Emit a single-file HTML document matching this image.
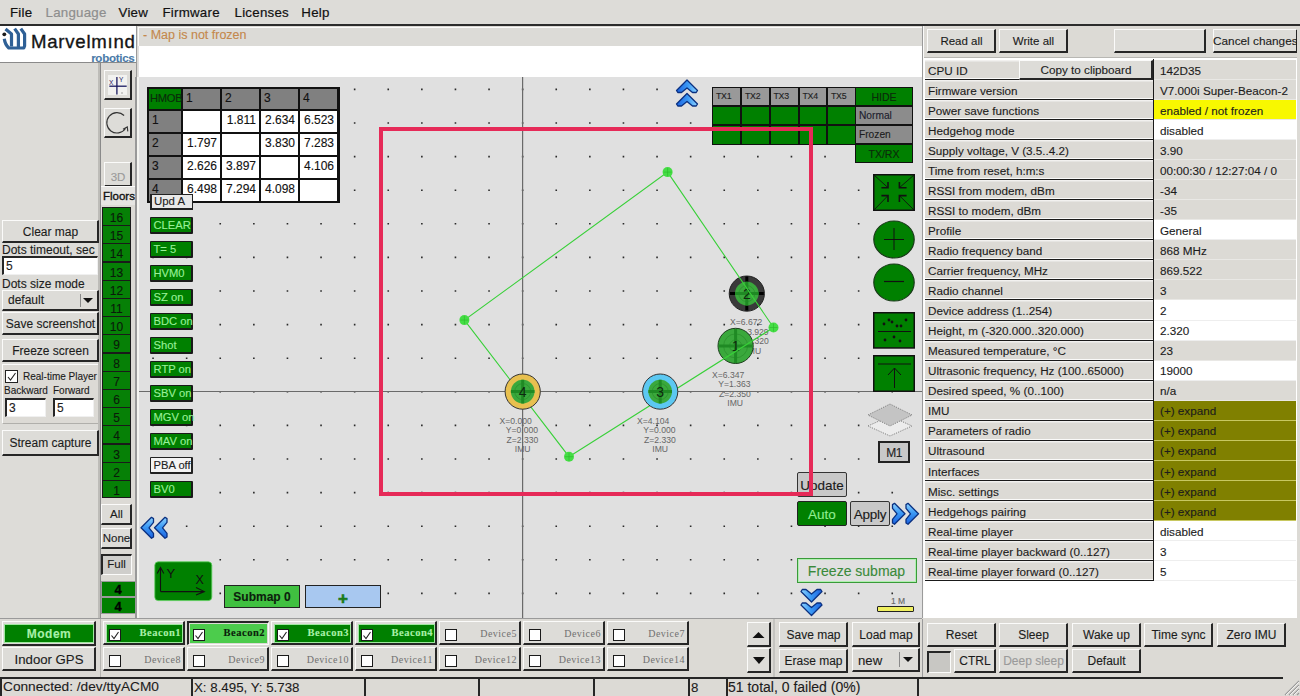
<!DOCTYPE html><html><head><meta charset="utf-8"><style>
*{margin:0;padding:0}
html,body{width:1300px;height:696px;overflow:hidden;background:#dcdad5;font-family:"Liberation Sans",sans-serif}
.a{position:absolute;box-sizing:border-box}
.t{position:absolute;line-height:1;white-space:nowrap;color:#1c1c1c;-webkit-text-stroke:0.12px}
.up{background:#dddcd8;border-top:1px solid #fbfbfa;border-left:1px solid #fbfbfa;border-right:2px solid #262626;border-bottom:2px solid #262626}
.dn{background:#d0cfcb;border-top:2px solid #262626;border-left:2px solid #262626;border-right:1px solid #fbfbfa;border-bottom:1px solid #fbfbfa}
.inp{background:#fff;border-top:2px solid #262626;border-left:2px solid #262626;border-right:1px solid #f0f0f0;border-bottom:1px solid #f0f0f0}
</style></head><body><div class="a " style="left:0px;top:0px;width:1300px;height:24px;background:#dddcd8"></div>
<div class="a " style="left:0px;top:24px;width:1300px;height:1.8px;background:#2c2c2c"></div>
<div class="t" style="left:10px;top:5.74px;font-size:13.3px;font-family:'Liberation Sans',sans-serif;font-weight:normal;color:#111;letter-spacing:0.25px;-webkit-text-stroke:0.2px #111">File</div>
<div class="t" style="left:45.5px;top:5.74px;font-size:13.3px;font-family:'Liberation Sans',sans-serif;font-weight:normal;color:#8e8e8e;letter-spacing:0.25px;-webkit-text-stroke:0.2px #8e8e8e">Language</div>
<div class="t" style="left:118.5px;top:5.74px;font-size:13.3px;font-family:'Liberation Sans',sans-serif;font-weight:normal;color:#111;letter-spacing:0.25px;-webkit-text-stroke:0.2px #111">View</div>
<div class="t" style="left:162.4px;top:5.74px;font-size:13.3px;font-family:'Liberation Sans',sans-serif;font-weight:normal;color:#111;letter-spacing:0.25px;-webkit-text-stroke:0.2px #111">Firmware</div>
<div class="t" style="left:234.5px;top:5.74px;font-size:13.3px;font-family:'Liberation Sans',sans-serif;font-weight:normal;color:#111;letter-spacing:0.25px;-webkit-text-stroke:0.2px #111">Licenses</div>
<div class="t" style="left:301.3px;top:5.74px;font-size:13.3px;font-family:'Liberation Sans',sans-serif;font-weight:normal;color:#111;letter-spacing:0.25px;-webkit-text-stroke:0.2px #111">Help</div>
<div class="a " style="left:0px;top:26px;width:136px;height:36px;background:#fff"></div>
<div class="a " style="left:0px;top:62px;width:136px;height:1px;background:#8a8a8a"></div>
<svg class="a" style="left:0px;top:24px" width="30" height="30" viewBox="0 0 30 30">
<g fill="none" stroke="#2f6096" stroke-width="3.2" stroke-linejoin="round">
<path d="M5.5 5 L11.5 10 L11.5 22.5"/>
<path d="M4.3 14.8 Q5 20.5 8.8 24 L23.8 24 L24.6 22 L24.6 10 L20.8 4.6"/>
<path d="M14.6 4.6 L18.4 10 L18.4 23"/>
</g>
<circle cx="4.3" cy="10.3" r="1.9" fill="#1a1a1a"/>
</svg>
<div class="t" style="left:31px;top:32.86px;font-size:18.6px;font-family:'Liberation Sans',sans-serif;font-weight:normal;color:#141414;letter-spacing:0.75px;-webkit-text-stroke:0.35px #141414">Marvelm&#305;nd</div>
<div class="t" style="left:54.50px;width:80px;text-align:right;top:52.18px;font-size:11.6px;font-family:'Liberation Sans',sans-serif;font-weight:bold;color:#4a7aa8;letter-spacing:-0.3px">robotics</div>
<div class="a " style="left:0px;top:63px;width:100px;height:555px;background:#dddcd8"></div>
<div class="a " style="left:98px;top:63px;width:2px;height:555px;background:#bdbcb8"></div>
<div class="a " style="left:100px;top:63px;width:36px;height:555px;background:#dcdad5"></div>
<div class="a " style="left:100px;top:63px;width:1px;height:555px;background:#8a8a8a"></div>
<div class="a up" style="left:104px;top:70px;width:28px;height:30px;"></div>
<svg class="a" style="left:104px;top:70px" width="28" height="30">
<rect x="4" y="5" width="19" height="20" fill="#f2f2f0"/>
<line x1="5.3" y1="16.2" x2="22.7" y2="16.2" stroke="#1a1a60" stroke-width="1.3"/>
<line x1="12.9" y1="6.9" x2="12.9" y2="24.4" stroke="#1a1a60" stroke-width="1.3"/>
<text x="5" y="15" font-size="6.5" fill="#1a1a60" font-family="Liberation Sans">X</text>
<text x="15" y="11.5" font-size="6.5" fill="#1a1a60" font-family="Liberation Sans">Y</text>
<rect x="17.5" y="22.5" width="1" height="1" fill="#555"/>
</svg>
<div class="a up" style="left:104px;top:108px;width:28px;height:30px;"></div>
<svg class="a" style="left:104px;top:108px" width="28" height="30">
<path d="M20.1 7.5 A10.2 10.2 0 1 0 21.5 20.5" fill="none" stroke="#333" stroke-width="1.1"/>
<path d="M19 21.2 L23.3 18.9 L23.8 23.4" fill="none" stroke="#333" stroke-width="1.1"/>
</svg>
<div class="a up" style="left:104px;top:162px;width:28px;height:25px;"></div>
<div class="t" style="left:94.00px;width:48px;text-align:center;top:171.77px;font-size:11.5px;font-family:'Liberation Sans',sans-serif;font-weight:normal;color:#9a9a9a;">3D</div>
<div class="a " style="left:101px;top:186px;width:34px;height:19px;background:#e6e5e2;border-top:1px solid #fbfbfa"></div>
<div class="t" style="left:103px;top:191.27px;font-size:11.5px;font-family:'Liberation Sans',sans-serif;font-weight:normal;color:#111;-webkit-text-stroke:0.35px #111">Floors</div>
<div class="a " style="left:102px;top:207px;width:29px;height:19px;background:#068006;border:1px solid #1a1a1a;border-bottom-width:1.5px"></div>
<div class="t" style="left:101.50px;width:30px;text-align:center;top:212.34px;font-size:12px;font-family:'Liberation Sans',sans-serif;font-weight:normal;color:#0a1a0a">16</div>
<div class="a " style="left:102px;top:225px;width:29px;height:19px;background:#068006;border:1px solid #1a1a1a;border-bottom-width:1.5px"></div>
<div class="t" style="left:101.50px;width:30px;text-align:center;top:230.34px;font-size:12px;font-family:'Liberation Sans',sans-serif;font-weight:normal;color:#0a1a0a">15</div>
<div class="a " style="left:102px;top:243px;width:29px;height:19px;background:#068006;border:1px solid #1a1a1a;border-bottom-width:1.5px"></div>
<div class="t" style="left:101.50px;width:30px;text-align:center;top:248.34px;font-size:12px;font-family:'Liberation Sans',sans-serif;font-weight:normal;color:#0a1a0a">14</div>
<div class="a " style="left:102px;top:262px;width:29px;height:19px;background:#068006;border:1px solid #1a1a1a;border-bottom-width:1.5px"></div>
<div class="t" style="left:101.50px;width:30px;text-align:center;top:267.34px;font-size:12px;font-family:'Liberation Sans',sans-serif;font-weight:normal;color:#0a1a0a">13</div>
<div class="a " style="left:102px;top:280px;width:29px;height:19px;background:#068006;border:1px solid #1a1a1a;border-bottom-width:1.5px"></div>
<div class="t" style="left:101.50px;width:30px;text-align:center;top:285.34px;font-size:12px;font-family:'Liberation Sans',sans-serif;font-weight:normal;color:#0a1a0a">12</div>
<div class="a " style="left:102px;top:298px;width:29px;height:19px;background:#068006;border:1px solid #1a1a1a;border-bottom-width:1.5px"></div>
<div class="t" style="left:101.50px;width:30px;text-align:center;top:303.34px;font-size:12px;font-family:'Liberation Sans',sans-serif;font-weight:normal;color:#0a1a0a">11</div>
<div class="a " style="left:102px;top:316px;width:29px;height:19px;background:#068006;border:1px solid #1a1a1a;border-bottom-width:1.5px"></div>
<div class="t" style="left:101.50px;width:30px;text-align:center;top:321.34px;font-size:12px;font-family:'Liberation Sans',sans-serif;font-weight:normal;color:#0a1a0a">10</div>
<div class="a " style="left:102px;top:334px;width:29px;height:19px;background:#068006;border:1px solid #1a1a1a;border-bottom-width:1.5px"></div>
<div class="t" style="left:101.50px;width:30px;text-align:center;top:339.34px;font-size:12px;font-family:'Liberation Sans',sans-serif;font-weight:normal;color:#0a1a0a">9</div>
<div class="a " style="left:102px;top:353px;width:29px;height:19px;background:#068006;border:1px solid #1a1a1a;border-bottom-width:1.5px"></div>
<div class="t" style="left:101.50px;width:30px;text-align:center;top:358.34px;font-size:12px;font-family:'Liberation Sans',sans-serif;font-weight:normal;color:#0a1a0a">8</div>
<div class="a " style="left:102px;top:371px;width:29px;height:19px;background:#068006;border:1px solid #1a1a1a;border-bottom-width:1.5px"></div>
<div class="t" style="left:101.50px;width:30px;text-align:center;top:376.34px;font-size:12px;font-family:'Liberation Sans',sans-serif;font-weight:normal;color:#0a1a0a">7</div>
<div class="a " style="left:102px;top:389px;width:29px;height:19px;background:#068006;border:1px solid #1a1a1a;border-bottom-width:1.5px"></div>
<div class="t" style="left:101.50px;width:30px;text-align:center;top:394.34px;font-size:12px;font-family:'Liberation Sans',sans-serif;font-weight:normal;color:#0a1a0a">6</div>
<div class="a " style="left:102px;top:407px;width:29px;height:19px;background:#068006;border:1px solid #1a1a1a;border-bottom-width:1.5px"></div>
<div class="t" style="left:101.50px;width:30px;text-align:center;top:412.34px;font-size:12px;font-family:'Liberation Sans',sans-serif;font-weight:normal;color:#0a1a0a">5</div>
<div class="a " style="left:102px;top:425px;width:29px;height:19px;background:#068006;border:1px solid #1a1a1a;border-bottom-width:1.5px"></div>
<div class="t" style="left:101.50px;width:30px;text-align:center;top:430.34px;font-size:12px;font-family:'Liberation Sans',sans-serif;font-weight:normal;color:#0a1a0a">4</div>
<div class="a " style="left:102px;top:444px;width:29px;height:19px;background:#068006;border:1px solid #1a1a1a;border-bottom-width:1.5px"></div>
<div class="t" style="left:101.50px;width:30px;text-align:center;top:449.34px;font-size:12px;font-family:'Liberation Sans',sans-serif;font-weight:normal;color:#0a1a0a">3</div>
<div class="a " style="left:102px;top:462px;width:29px;height:19px;background:#068006;border:1px solid #1a1a1a;border-bottom-width:1.5px"></div>
<div class="t" style="left:101.50px;width:30px;text-align:center;top:467.34px;font-size:12px;font-family:'Liberation Sans',sans-serif;font-weight:normal;color:#0a1a0a">2</div>
<div class="a " style="left:102px;top:480px;width:29px;height:18px;background:#068006;border:1px solid #1a1a1a;border-bottom-width:1.5px"></div>
<div class="t" style="left:101.50px;width:30px;text-align:center;top:485.34px;font-size:12px;font-family:'Liberation Sans',sans-serif;font-weight:normal;color:#0a1a0a">1</div>
<div class="a up" style="left:101px;top:504px;width:31px;height:21px;"></div>
<div class="t" style="left:91.00px;width:51px;text-align:center;top:508.91px;font-size:11.5px;font-family:'Liberation Sans',sans-serif;font-weight:normal;color:#1c1c1c;">All</div>
<div class="a up" style="left:101px;top:528px;width:31px;height:21px;"></div>
<div class="t" style="left:91.00px;width:51px;text-align:center;top:532.91px;font-size:11.5px;font-family:'Liberation Sans',sans-serif;font-weight:normal;color:#1c1c1c;">None</div>
<div class="a " style="left:101px;top:554px;width:31px;height:21px;background:#cfcecb;border-top:2px solid #262626;border-left:2px solid #262626;border-right:1px solid #fbfbfa;border-bottom:1px solid #fbfbfa"></div>
<div class="t" style="left:96.50px;width:40px;text-align:center;top:559.27px;font-size:11.5px;font-family:'Liberation Sans',sans-serif;font-weight:normal;color:#1c1c1c">Full</div>
<div class="a " style="left:101px;top:581px;width:35px;height:16px;background:#008000;border:1px solid #9a9a9a"></div>
<div class="t" style="left:103.00px;width:30px;text-align:center;top:583.00px;font-size:13px;font-family:'Liberation Sans',sans-serif;font-weight:bold;color:#000;-webkit-text-stroke:0.3px #000">4</div>
<div class="a " style="left:101px;top:597px;width:35px;height:17px;background:#008000;border:1px solid #9a9a9a"></div>
<div class="t" style="left:103.00px;width:30px;text-align:center;top:599.50px;font-size:13px;font-family:'Liberation Sans',sans-serif;font-weight:bold;color:#000;-webkit-text-stroke:0.3px #000">4</div>
<div class="a up" style="left:2px;top:220px;width:97px;height:23px;"></div>
<div class="t" style="left:-8.00px;width:117px;text-align:center;top:225.66px;font-size:12px;font-family:'Liberation Sans',sans-serif;font-weight:normal;color:#1c1c1c;">Clear map</div>
<div class="t" style="left:2px;top:243.84px;font-size:12px;font-family:'Liberation Sans',sans-serif;font-weight:normal;">Dots timeout, sec</div>
<div class="a inp" style="left:2px;top:256px;width:96px;height:19px;"></div>
<div class="t" style="left:6px;top:259.84px;font-size:12px;font-family:'Liberation Sans',sans-serif;font-weight:normal;">5</div>
<div class="t" style="left:2px;top:277.84px;font-size:12px;font-family:'Liberation Sans',sans-serif;font-weight:normal;">Dots size mode</div>
<div class="a up" style="left:2px;top:290px;width:97px;height:21px;"></div>
<div class="t" style="left:8px;top:293.84px;font-size:12px;font-family:'Liberation Sans',sans-serif;font-weight:normal;">default</div>
<div class="a " style="left:80px;top:294px;width:1px;height:13px;background:#8a8a8a"></div>
<svg class="a" style="left:82px;top:295px" width="12" height="10"><path d="M1 3 L11 3 L6 8Z" fill="#111"/></svg>
<div class="a up" style="left:2px;top:312px;width:97px;height:23px;"></div>
<div class="t" style="left:-8.00px;width:117px;text-align:center;top:317.66px;font-size:12px;font-family:'Liberation Sans',sans-serif;font-weight:normal;color:#1c1c1c;">Save screenshot</div>
<div class="a up" style="left:2px;top:339px;width:97px;height:23px;"></div>
<div class="t" style="left:-8.00px;width:117px;text-align:center;top:344.66px;font-size:12px;font-family:'Liberation Sans',sans-serif;font-weight:normal;color:#1c1c1c;">Freeze screen</div>
<div class="a " style="left:2px;top:364px;width:96px;height:60px;background:#dcdad5;border-top:1px solid #fbfbfa;border-left:1px solid #fbfbfa;border-bottom:1px solid #b0afab"></div>
<div class="a " style="left:5px;top:370px;width:13px;height:13px;background:#fff;border:1.5px solid #222"></div>
<svg class="a" style="left:5px;top:370px" width="13" height="13"><path d="M3 7 L5.5 10 L10.5 3" fill="none" stroke="#222" stroke-width="1.1"/></svg>
<div class="t" style="left:23px;top:371.54px;font-size:10px;font-family:'Liberation Sans',sans-serif;font-weight:normal;color:#1c1c1c">Real-time Player</div>
<div class="t" style="left:4px;top:386.04px;font-size:10px;font-family:'Liberation Sans',sans-serif;font-weight:normal;color:#1c1c1c">Backward</div>
<div class="t" style="left:53px;top:386.04px;font-size:10px;font-family:'Liberation Sans',sans-serif;font-weight:normal;color:#1c1c1c">Forward</div>
<div class="a inp" style="left:5px;top:398px;width:41px;height:19px;"></div>
<div class="t" style="left:9px;top:401.84px;font-size:12px;font-family:'Liberation Sans',sans-serif;font-weight:normal;">3</div>
<div class="a inp" style="left:53px;top:398px;width:41px;height:19px;"></div>
<div class="t" style="left:57px;top:401.84px;font-size:12px;font-family:'Liberation Sans',sans-serif;font-weight:normal;">5</div>
<div class="a up" style="left:2px;top:430px;width:97px;height:26px;"></div>
<div class="t" style="left:-8.00px;width:117px;text-align:center;top:437.16px;font-size:12px;font-family:'Liberation Sans',sans-serif;font-weight:normal;color:#1c1c1c;">Stream capture</div>
<div class="a " style="left:0px;top:618px;width:1300px;height:59px;background:#dcdad5"></div>
<div class="a " style="left:0px;top:618px;width:922px;height:1px;background:#9a9a9a"></div>
<div class="a " style="left:100px;top:619px;width:1px;height:58px;background:#b5b4b0"></div>
<div class="a " style="left:2px;top:621px;width:94px;height:25px;background:#dddcd8;border-top:1px solid #fbfbfa;border-left:1px solid #fbfbfa;border-right:2px solid #262626;border-bottom:2px solid #262626"></div>
<div class="a " style="left:4px;top:624px;width:90px;height:19px;background:#008000;border:1px solid #a0e8a0"></div>
<div class="t" style="left:4.00px;width:90px;text-align:center;top:627.84px;font-size:12px;font-family:'Liberation Sans',sans-serif;font-weight:bold;color:#a8f0a8;letter-spacing:0.5px">Modem</div>
<div class="a up" style="left:2px;top:647px;width:94px;height:24px;"></div>
<div class="t" style="left:-8.00px;width:114px;text-align:center;top:652.58px;font-size:13.2px;font-family:'Liberation Sans',sans-serif;font-weight:normal;color:#1c1c1c;">Indoor GPS</div>
<div class="a up" style="left:103px;top:621px;width:82px;height:24px;"></div>
<div class="a " style="left:106px;top:624px;width:77px;height:19px;background:#008000;border:1px solid #a0e8a0"></div>
<div class="a " style="left:109px;top:629px;width:12px;height:12px;background:#fff;border:1.5px solid #1a1a1a"></div>
<svg class="a" style="left:109px;top:629px" width="12" height="12"><path d="M2.5 6.5 L5 9.5 L9.5 3" fill="none" stroke="#222" stroke-width="1.1"/></svg>
<div class="t" style="left:111.00px;width:70px;text-align:right;top:628.11px;font-size:10.5px;font-family:'Liberation Serif',serif;font-weight:bold;color:#a8f0a8;letter-spacing:0.5px">Beacon1</div>
<div class="a up" style="left:103px;top:647px;width:82px;height:24px;"></div>
<div class="a " style="left:109px;top:655px;width:12px;height:12px;background:#fff;border:1.5px solid #1a1a1a"></div>
<div class="t" style="left:111.00px;width:70px;text-align:right;top:654.83px;font-size:10px;font-family:'Liberation Serif',serif;font-weight:normal;color:#707070;letter-spacing:0.5px;-webkit-text-stroke:0px">Device8</div>
<div class="a " style="left:187px;top:621px;width:82px;height:24px;background:#dcdad5;border-top:2px solid #262626;border-left:2px solid #262626;border-right:1px solid #fbfbfa;border-bottom:1px solid #fbfbfa"></div>
<div class="a " style="left:190px;top:624px;width:77px;height:19px;background:#4ccc4c"></div>
<div class="a " style="left:193px;top:629px;width:12px;height:12px;background:#fff;border:1.5px solid #1a1a1a"></div>
<svg class="a" style="left:193px;top:629px" width="12" height="12"><path d="M2.5 6.5 L5 9.5 L9.5 3" fill="none" stroke="#222" stroke-width="1.1"/></svg>
<div class="t" style="left:195.00px;width:70px;text-align:right;top:628.11px;font-size:10.5px;font-family:'Liberation Serif',serif;font-weight:bold;color:#0a200a;letter-spacing:0.5px">Beacon2</div>
<div class="a up" style="left:187px;top:647px;width:82px;height:24px;"></div>
<div class="a " style="left:193px;top:655px;width:12px;height:12px;background:#fff;border:1.5px solid #1a1a1a"></div>
<div class="t" style="left:195.00px;width:70px;text-align:right;top:654.83px;font-size:10px;font-family:'Liberation Serif',serif;font-weight:normal;color:#707070;letter-spacing:0.5px;-webkit-text-stroke:0px">Device9</div>
<div class="a up" style="left:271px;top:621px;width:82px;height:24px;"></div>
<div class="a " style="left:274px;top:624px;width:77px;height:19px;background:#008000;border:1px solid #a0e8a0"></div>
<div class="a " style="left:277px;top:629px;width:12px;height:12px;background:#fff;border:1.5px solid #1a1a1a"></div>
<svg class="a" style="left:277px;top:629px" width="12" height="12"><path d="M2.5 6.5 L5 9.5 L9.5 3" fill="none" stroke="#222" stroke-width="1.1"/></svg>
<div class="t" style="left:279.00px;width:70px;text-align:right;top:628.11px;font-size:10.5px;font-family:'Liberation Serif',serif;font-weight:bold;color:#a8f0a8;letter-spacing:0.5px">Beacon3</div>
<div class="a up" style="left:271px;top:647px;width:82px;height:24px;"></div>
<div class="a " style="left:277px;top:655px;width:12px;height:12px;background:#fff;border:1.5px solid #1a1a1a"></div>
<div class="t" style="left:279.00px;width:70px;text-align:right;top:654.83px;font-size:10px;font-family:'Liberation Serif',serif;font-weight:normal;color:#707070;letter-spacing:0.5px;-webkit-text-stroke:0px">Device10</div>
<div class="a up" style="left:355px;top:621px;width:82px;height:24px;"></div>
<div class="a " style="left:358px;top:624px;width:77px;height:19px;background:#008000;border:1px solid #a0e8a0"></div>
<div class="a " style="left:361px;top:629px;width:12px;height:12px;background:#fff;border:1.5px solid #1a1a1a"></div>
<svg class="a" style="left:361px;top:629px" width="12" height="12"><path d="M2.5 6.5 L5 9.5 L9.5 3" fill="none" stroke="#222" stroke-width="1.1"/></svg>
<div class="t" style="left:363.00px;width:70px;text-align:right;top:628.11px;font-size:10.5px;font-family:'Liberation Serif',serif;font-weight:bold;color:#a8f0a8;letter-spacing:0.5px">Beacon4</div>
<div class="a up" style="left:355px;top:647px;width:82px;height:24px;"></div>
<div class="a " style="left:361px;top:655px;width:12px;height:12px;background:#fff;border:1.5px solid #1a1a1a"></div>
<div class="t" style="left:363.00px;width:70px;text-align:right;top:654.83px;font-size:10px;font-family:'Liberation Serif',serif;font-weight:normal;color:#707070;letter-spacing:0.5px;-webkit-text-stroke:0px">Device11</div>
<div class="a up" style="left:439px;top:621px;width:82px;height:24px;"></div>
<div class="a " style="left:445px;top:629px;width:12px;height:12px;background:#fff;border:1.5px solid #1a1a1a"></div>
<div class="t" style="left:447.00px;width:70px;text-align:right;top:628.83px;font-size:10px;font-family:'Liberation Serif',serif;font-weight:normal;color:#707070;letter-spacing:0.5px;-webkit-text-stroke:0px">Device5</div>
<div class="a up" style="left:439px;top:647px;width:82px;height:24px;"></div>
<div class="a " style="left:445px;top:655px;width:12px;height:12px;background:#fff;border:1.5px solid #1a1a1a"></div>
<div class="t" style="left:447.00px;width:70px;text-align:right;top:654.83px;font-size:10px;font-family:'Liberation Serif',serif;font-weight:normal;color:#707070;letter-spacing:0.5px;-webkit-text-stroke:0px">Device12</div>
<div class="a up" style="left:523px;top:621px;width:82px;height:24px;"></div>
<div class="a " style="left:529px;top:629px;width:12px;height:12px;background:#fff;border:1.5px solid #1a1a1a"></div>
<div class="t" style="left:531.00px;width:70px;text-align:right;top:628.83px;font-size:10px;font-family:'Liberation Serif',serif;font-weight:normal;color:#707070;letter-spacing:0.5px;-webkit-text-stroke:0px">Device6</div>
<div class="a up" style="left:523px;top:647px;width:82px;height:24px;"></div>
<div class="a " style="left:529px;top:655px;width:12px;height:12px;background:#fff;border:1.5px solid #1a1a1a"></div>
<div class="t" style="left:531.00px;width:70px;text-align:right;top:654.83px;font-size:10px;font-family:'Liberation Serif',serif;font-weight:normal;color:#707070;letter-spacing:0.5px;-webkit-text-stroke:0px">Device13</div>
<div class="a up" style="left:607px;top:621px;width:82px;height:24px;"></div>
<div class="a " style="left:613px;top:629px;width:12px;height:12px;background:#fff;border:1.5px solid #1a1a1a"></div>
<div class="t" style="left:615.00px;width:70px;text-align:right;top:628.83px;font-size:10px;font-family:'Liberation Serif',serif;font-weight:normal;color:#707070;letter-spacing:0.5px;-webkit-text-stroke:0px">Device7</div>
<div class="a up" style="left:607px;top:647px;width:82px;height:24px;"></div>
<div class="a " style="left:613px;top:655px;width:12px;height:12px;background:#fff;border:1.5px solid #1a1a1a"></div>
<div class="t" style="left:615.00px;width:70px;text-align:right;top:654.83px;font-size:10px;font-family:'Liberation Serif',serif;font-weight:normal;color:#707070;letter-spacing:0.5px;-webkit-text-stroke:0px">Device14</div>
<div class="a up" style="left:747px;top:622px;width:24px;height:25px;"></div>
<svg class="a" style="left:747px;top:622px" width="24" height="25"><path d="M5.5 16 L17.5 16 L11.5 10Z" fill="#111"/></svg>
<div class="a up" style="left:747px;top:648px;width:24px;height:25px;"></div>
<svg class="a" style="left:747px;top:648px" width="24" height="25"><path d="M6 9 L18 9 L12 16Z" fill="#111"/></svg>
<div class="a " style="left:773px;top:619px;width:2px;height:58px;background:#c5c4c0"></div>
<div class="a up" style="left:779px;top:622px;width:69px;height:25px;"></div>
<div class="t" style="left:769.00px;width:89px;text-align:center;top:628.66px;font-size:12px;font-family:'Liberation Sans',sans-serif;font-weight:normal;color:#1c1c1c;">Save map</div>
<div class="a up" style="left:852px;top:622px;width:68px;height:25px;"></div>
<div class="t" style="left:842.00px;width:88px;text-align:center;top:628.66px;font-size:12px;font-family:'Liberation Sans',sans-serif;font-weight:normal;color:#1c1c1c;">Load map</div>
<div class="a up" style="left:779px;top:649px;width:69px;height:24px;"></div>
<div class="t" style="left:769.00px;width:89px;text-align:center;top:655.16px;font-size:12px;font-family:'Liberation Sans',sans-serif;font-weight:normal;color:#1c1c1c;">Erase map</div>
<div class="a up" style="left:852px;top:648px;width:68px;height:24px;"></div>
<div class="t" style="left:858px;top:653.83px;font-size:13.2px;font-family:'Liberation Sans',sans-serif;font-weight:normal;">new</div>
<div class="a " style="left:899px;top:652px;width:1px;height:15px;background:#8a8a8a"></div>
<svg class="a" style="left:901px;top:654px" width="14" height="12"><path d="M2 3 L12 3 L7 8Z" fill="#111"/></svg>
<div class="a up" style="left:927px;top:623px;width:69px;height:24px;"></div>
<div class="t" style="left:917.00px;width:89px;text-align:center;top:629.16px;font-size:12px;font-family:'Liberation Sans',sans-serif;font-weight:normal;color:#1c1c1c;">Reset</div>
<div class="a up" style="left:999px;top:623px;width:69px;height:24px;"></div>
<div class="t" style="left:989.00px;width:89px;text-align:center;top:629.16px;font-size:12px;font-family:'Liberation Sans',sans-serif;font-weight:normal;color:#1c1c1c;">Sleep</div>
<div class="a up" style="left:1072px;top:623px;width:69px;height:24px;"></div>
<div class="t" style="left:1062.00px;width:89px;text-align:center;top:629.16px;font-size:12px;font-family:'Liberation Sans',sans-serif;font-weight:normal;color:#1c1c1c;">Wake up</div>
<div class="a up" style="left:1144px;top:623px;width:69px;height:24px;"></div>
<div class="t" style="left:1134.00px;width:89px;text-align:center;top:629.16px;font-size:12px;font-family:'Liberation Sans',sans-serif;font-weight:normal;color:#1c1c1c;">Time sync</div>
<div class="a up" style="left:1217px;top:623px;width:69px;height:24px;"></div>
<div class="t" style="left:1207.00px;width:89px;text-align:center;top:629.16px;font-size:12px;font-family:'Liberation Sans',sans-serif;font-weight:normal;color:#1c1c1c;">Zero IMU</div>
<div class="a " style="left:927px;top:651px;width:24px;height:22px;background:#c8c7c3;border-top:2px solid #262626;border-left:2px solid #262626;border-right:1px solid #fbfbfa;border-bottom:1px solid #fbfbfa"></div>
<div class="a up" style="left:954px;top:649px;width:42px;height:24px;"></div>
<div class="t" style="left:944.00px;width:62px;text-align:center;top:655.16px;font-size:12px;font-family:'Liberation Sans',sans-serif;font-weight:normal;color:#1c1c1c;">CTRL</div>
<div class="a up" style="left:999px;top:649px;width:69px;height:24px;"></div>
<div class="t" style="left:989.00px;width:89px;text-align:center;top:655.16px;font-size:12px;font-family:'Liberation Sans',sans-serif;font-weight:normal;color:#9a9a9a;">Deep sleep</div>
<div class="a up" style="left:1072px;top:649px;width:69px;height:24px;"></div>
<div class="t" style="left:1062.00px;width:89px;text-align:center;top:655.16px;font-size:12px;font-family:'Liberation Sans',sans-serif;font-weight:normal;color:#1c1c1c;">Default</div>
<div class="a " style="left:922px;top:619px;width:1px;height:58px;background:#9a9a9a"></div>
<div class="a " style="left:0px;top:677px;width:1300px;height:19px;background:#dcdad5"></div>
<div class="a " style="left:0px;top:677px;width:191px;height:19px;border-top:2px solid #262626;border-left:2px solid #262626"></div>
<div class="a " style="left:191px;top:677px;width:173px;height:19px;border-top:2px solid #262626;border-left:2px solid #262626"></div>
<div class="a " style="left:364px;top:677px;width:114px;height:19px;border-top:2px solid #262626;border-left:2px solid #262626"></div>
<div class="a " style="left:478px;top:677px;width:115px;height:19px;border-top:2px solid #262626;border-left:2px solid #262626"></div>
<div class="a " style="left:593px;top:677px;width:95px;height:19px;border-top:2px solid #262626;border-left:2px solid #262626"></div>
<div class="a " style="left:688px;top:677px;width:38px;height:19px;border-top:2px solid #262626;border-left:2px solid #262626"></div>
<div class="a " style="left:726px;top:677px;width:191px;height:19px;border-top:2px solid #262626;border-left:2px solid #262626"></div>
<div class="a " style="left:917px;top:677px;width:366px;height:19px;border-top:2px solid #262626;border-left:2px solid #262626"></div>
<div class="t" style="left:3px;top:680.40px;font-size:13.7px;font-family:'Liberation Sans',sans-serif;font-weight:normal;">Connected: /dev/ttyACM0</div>
<div class="t" style="left:194px;top:680.74px;font-size:13.3px;font-family:'Liberation Sans',sans-serif;font-weight:normal;">X: 8.495, Y: 5.738</div>
<div class="t" style="left:691px;top:680.74px;font-size:13.3px;font-family:'Liberation Sans',sans-serif;font-weight:normal;">8</div>
<div class="t" style="left:728px;top:680.15px;font-size:14px;font-family:'Liberation Sans',sans-serif;font-weight:normal;">51 total, 0 failed (0%)</div>
<svg class="a" style="left:1283px;top:679px" width="17" height="17"><path d="M16 2 L2 16 M16 6 L6 16 M16 10 L10 16 M16 14 L14 16" stroke="#9a9a9a" stroke-width="1.2"/><path d="M16 3 L3 16 M16 7 L7 16 M16 11 L11 16" stroke="#fafafa" stroke-width="0.8"/></svg>
<div class="a " style="left:136px;top:26px;width:1px;height:592px;background:#9a9a9a"></div>
<div class="a " style="left:137px;top:26px;width:786px;height:592px;background:#dcdad5"></div>
<div class="a " style="left:138px;top:27px;width:784px;height:19px;background:#dcdbd7;border-top:1px solid #fbfbfa;border-left:1px solid #fbfbfa"></div>
<div class="t" style="left:143px;top:28.82px;font-size:12.5px;font-family:'Liberation Sans',sans-serif;font-weight:normal;color:#c4884c">- Map is not frozen</div>
<div class="a " style="left:138px;top:46px;width:784px;height:30.6px;background:#fff;border-left:1px solid #e0e0e0"></div>
<svg class="a" style="left:137px;top:77px" width="785" height="541"><rect x="0" y="0" width="785" height="541" fill="#e0e0e0"/><path d="M15.25 11.60h1.6v1.6h-1.6zM15.25 45.20h1.6v1.6h-1.6zM15.25 78.80h1.6v1.6h-1.6zM15.25 112.40h1.6v1.6h-1.6zM15.25 146.00h1.6v1.6h-1.6zM15.25 179.60h1.6v1.6h-1.6zM15.25 213.20h1.6v1.6h-1.6zM15.25 246.80h1.6v1.6h-1.6zM15.25 280.40h1.6v1.6h-1.6zM15.25 314.00h1.6v1.6h-1.6zM15.25 347.60h1.6v1.6h-1.6zM15.25 381.20h1.6v1.6h-1.6zM15.25 414.80h1.6v1.6h-1.6zM48.85 11.60h1.6v1.6h-1.6zM48.85 45.20h1.6v1.6h-1.6zM48.85 78.80h1.6v1.6h-1.6zM48.85 112.40h1.6v1.6h-1.6zM48.85 146.00h1.6v1.6h-1.6zM48.85 179.60h1.6v1.6h-1.6zM48.85 213.20h1.6v1.6h-1.6zM48.85 246.80h1.6v1.6h-1.6zM48.85 280.40h1.6v1.6h-1.6zM48.85 314.00h1.6v1.6h-1.6zM48.85 347.60h1.6v1.6h-1.6zM48.85 381.20h1.6v1.6h-1.6zM48.85 414.80h1.6v1.6h-1.6zM48.85 448.40h1.6v1.6h-1.6zM82.45 11.60h1.6v1.6h-1.6zM82.45 45.20h1.6v1.6h-1.6zM82.45 78.80h1.6v1.6h-1.6zM82.45 112.40h1.6v1.6h-1.6zM82.45 146.00h1.6v1.6h-1.6zM82.45 179.60h1.6v1.6h-1.6zM82.45 213.20h1.6v1.6h-1.6zM82.45 246.80h1.6v1.6h-1.6zM82.45 280.40h1.6v1.6h-1.6zM82.45 314.00h1.6v1.6h-1.6zM82.45 347.60h1.6v1.6h-1.6zM82.45 381.20h1.6v1.6h-1.6zM82.45 414.80h1.6v1.6h-1.6zM82.45 448.40h1.6v1.6h-1.6zM82.45 482.00h1.6v1.6h-1.6zM82.45 515.60h1.6v1.6h-1.6zM116.05 11.60h1.6v1.6h-1.6zM116.05 45.20h1.6v1.6h-1.6zM116.05 78.80h1.6v1.6h-1.6zM116.05 112.40h1.6v1.6h-1.6zM116.05 146.00h1.6v1.6h-1.6zM116.05 179.60h1.6v1.6h-1.6zM116.05 213.20h1.6v1.6h-1.6zM116.05 246.80h1.6v1.6h-1.6zM116.05 280.40h1.6v1.6h-1.6zM116.05 314.00h1.6v1.6h-1.6zM116.05 347.60h1.6v1.6h-1.6zM116.05 381.20h1.6v1.6h-1.6zM116.05 414.80h1.6v1.6h-1.6zM116.05 448.40h1.6v1.6h-1.6zM116.05 482.00h1.6v1.6h-1.6zM116.05 515.60h1.6v1.6h-1.6zM149.65 11.60h1.6v1.6h-1.6zM149.65 45.20h1.6v1.6h-1.6zM149.65 78.80h1.6v1.6h-1.6zM149.65 112.40h1.6v1.6h-1.6zM149.65 146.00h1.6v1.6h-1.6zM149.65 179.60h1.6v1.6h-1.6zM149.65 213.20h1.6v1.6h-1.6zM149.65 246.80h1.6v1.6h-1.6zM149.65 280.40h1.6v1.6h-1.6zM149.65 314.00h1.6v1.6h-1.6zM149.65 347.60h1.6v1.6h-1.6zM149.65 381.20h1.6v1.6h-1.6zM149.65 414.80h1.6v1.6h-1.6zM149.65 448.40h1.6v1.6h-1.6zM149.65 482.00h1.6v1.6h-1.6zM149.65 515.60h1.6v1.6h-1.6zM183.25 11.60h1.6v1.6h-1.6zM183.25 45.20h1.6v1.6h-1.6zM183.25 78.80h1.6v1.6h-1.6zM183.25 112.40h1.6v1.6h-1.6zM183.25 146.00h1.6v1.6h-1.6zM183.25 179.60h1.6v1.6h-1.6zM183.25 213.20h1.6v1.6h-1.6zM183.25 246.80h1.6v1.6h-1.6zM183.25 280.40h1.6v1.6h-1.6zM183.25 314.00h1.6v1.6h-1.6zM183.25 347.60h1.6v1.6h-1.6zM183.25 381.20h1.6v1.6h-1.6zM183.25 414.80h1.6v1.6h-1.6zM183.25 448.40h1.6v1.6h-1.6zM183.25 482.00h1.6v1.6h-1.6zM183.25 515.60h1.6v1.6h-1.6zM216.85 11.60h1.6v1.6h-1.6zM216.85 45.20h1.6v1.6h-1.6zM216.85 78.80h1.6v1.6h-1.6zM216.85 112.40h1.6v1.6h-1.6zM216.85 146.00h1.6v1.6h-1.6zM216.85 179.60h1.6v1.6h-1.6zM216.85 213.20h1.6v1.6h-1.6zM216.85 246.80h1.6v1.6h-1.6zM216.85 280.40h1.6v1.6h-1.6zM216.85 314.00h1.6v1.6h-1.6zM216.85 347.60h1.6v1.6h-1.6zM216.85 381.20h1.6v1.6h-1.6zM216.85 414.80h1.6v1.6h-1.6zM216.85 448.40h1.6v1.6h-1.6zM216.85 482.00h1.6v1.6h-1.6zM216.85 515.60h1.6v1.6h-1.6zM250.45 11.60h1.6v1.6h-1.6zM250.45 45.20h1.6v1.6h-1.6zM250.45 78.80h1.6v1.6h-1.6zM250.45 112.40h1.6v1.6h-1.6zM250.45 146.00h1.6v1.6h-1.6zM250.45 179.60h1.6v1.6h-1.6zM250.45 213.20h1.6v1.6h-1.6zM250.45 246.80h1.6v1.6h-1.6zM250.45 280.40h1.6v1.6h-1.6zM250.45 314.00h1.6v1.6h-1.6zM250.45 347.60h1.6v1.6h-1.6zM250.45 381.20h1.6v1.6h-1.6zM250.45 414.80h1.6v1.6h-1.6zM250.45 448.40h1.6v1.6h-1.6zM250.45 482.00h1.6v1.6h-1.6zM250.45 515.60h1.6v1.6h-1.6zM284.05 11.60h1.6v1.6h-1.6zM284.05 45.20h1.6v1.6h-1.6zM284.05 78.80h1.6v1.6h-1.6zM284.05 112.40h1.6v1.6h-1.6zM284.05 146.00h1.6v1.6h-1.6zM284.05 179.60h1.6v1.6h-1.6zM284.05 213.20h1.6v1.6h-1.6zM284.05 246.80h1.6v1.6h-1.6zM284.05 280.40h1.6v1.6h-1.6zM284.05 314.00h1.6v1.6h-1.6zM284.05 347.60h1.6v1.6h-1.6zM284.05 381.20h1.6v1.6h-1.6zM284.05 414.80h1.6v1.6h-1.6zM284.05 448.40h1.6v1.6h-1.6zM284.05 482.00h1.6v1.6h-1.6zM284.05 515.60h1.6v1.6h-1.6zM317.65 11.60h1.6v1.6h-1.6zM317.65 45.20h1.6v1.6h-1.6zM317.65 78.80h1.6v1.6h-1.6zM317.65 112.40h1.6v1.6h-1.6zM317.65 146.00h1.6v1.6h-1.6zM317.65 179.60h1.6v1.6h-1.6zM317.65 213.20h1.6v1.6h-1.6zM317.65 246.80h1.6v1.6h-1.6zM317.65 280.40h1.6v1.6h-1.6zM317.65 314.00h1.6v1.6h-1.6zM317.65 347.60h1.6v1.6h-1.6zM317.65 381.20h1.6v1.6h-1.6zM317.65 414.80h1.6v1.6h-1.6zM317.65 448.40h1.6v1.6h-1.6zM317.65 482.00h1.6v1.6h-1.6zM317.65 515.60h1.6v1.6h-1.6zM351.25 11.60h1.6v1.6h-1.6zM351.25 45.20h1.6v1.6h-1.6zM351.25 78.80h1.6v1.6h-1.6zM351.25 112.40h1.6v1.6h-1.6zM351.25 146.00h1.6v1.6h-1.6zM351.25 179.60h1.6v1.6h-1.6zM351.25 213.20h1.6v1.6h-1.6zM351.25 246.80h1.6v1.6h-1.6zM351.25 280.40h1.6v1.6h-1.6zM351.25 314.00h1.6v1.6h-1.6zM351.25 347.60h1.6v1.6h-1.6zM351.25 381.20h1.6v1.6h-1.6zM351.25 414.80h1.6v1.6h-1.6zM351.25 448.40h1.6v1.6h-1.6zM351.25 482.00h1.6v1.6h-1.6zM351.25 515.60h1.6v1.6h-1.6zM384.85 11.60h1.6v1.6h-1.6zM384.85 45.20h1.6v1.6h-1.6zM384.85 78.80h1.6v1.6h-1.6zM384.85 112.40h1.6v1.6h-1.6zM384.85 146.00h1.6v1.6h-1.6zM384.85 179.60h1.6v1.6h-1.6zM384.85 213.20h1.6v1.6h-1.6zM384.85 246.80h1.6v1.6h-1.6zM384.85 280.40h1.6v1.6h-1.6zM384.85 314.00h1.6v1.6h-1.6zM384.85 347.60h1.6v1.6h-1.6zM384.85 381.20h1.6v1.6h-1.6zM384.85 414.80h1.6v1.6h-1.6zM384.85 448.40h1.6v1.6h-1.6zM384.85 482.00h1.6v1.6h-1.6zM384.85 515.60h1.6v1.6h-1.6zM418.45 11.60h1.6v1.6h-1.6zM418.45 45.20h1.6v1.6h-1.6zM418.45 78.80h1.6v1.6h-1.6zM418.45 112.40h1.6v1.6h-1.6zM418.45 146.00h1.6v1.6h-1.6zM418.45 179.60h1.6v1.6h-1.6zM418.45 213.20h1.6v1.6h-1.6zM418.45 246.80h1.6v1.6h-1.6zM418.45 280.40h1.6v1.6h-1.6zM418.45 314.00h1.6v1.6h-1.6zM418.45 347.60h1.6v1.6h-1.6zM418.45 381.20h1.6v1.6h-1.6zM418.45 414.80h1.6v1.6h-1.6zM418.45 448.40h1.6v1.6h-1.6zM418.45 482.00h1.6v1.6h-1.6zM418.45 515.60h1.6v1.6h-1.6zM452.05 11.60h1.6v1.6h-1.6zM452.05 45.20h1.6v1.6h-1.6zM452.05 78.80h1.6v1.6h-1.6zM452.05 112.40h1.6v1.6h-1.6zM452.05 146.00h1.6v1.6h-1.6zM452.05 179.60h1.6v1.6h-1.6zM452.05 213.20h1.6v1.6h-1.6zM452.05 246.80h1.6v1.6h-1.6zM452.05 280.40h1.6v1.6h-1.6zM452.05 314.00h1.6v1.6h-1.6zM452.05 347.60h1.6v1.6h-1.6zM452.05 381.20h1.6v1.6h-1.6zM452.05 414.80h1.6v1.6h-1.6zM452.05 448.40h1.6v1.6h-1.6zM452.05 482.00h1.6v1.6h-1.6zM452.05 515.60h1.6v1.6h-1.6zM485.65 11.60h1.6v1.6h-1.6zM485.65 45.20h1.6v1.6h-1.6zM485.65 78.80h1.6v1.6h-1.6zM485.65 112.40h1.6v1.6h-1.6zM485.65 146.00h1.6v1.6h-1.6zM485.65 179.60h1.6v1.6h-1.6zM485.65 213.20h1.6v1.6h-1.6zM485.65 246.80h1.6v1.6h-1.6zM485.65 280.40h1.6v1.6h-1.6zM485.65 314.00h1.6v1.6h-1.6zM485.65 347.60h1.6v1.6h-1.6zM485.65 381.20h1.6v1.6h-1.6zM485.65 414.80h1.6v1.6h-1.6zM485.65 448.40h1.6v1.6h-1.6zM485.65 482.00h1.6v1.6h-1.6zM485.65 515.60h1.6v1.6h-1.6zM519.25 11.60h1.6v1.6h-1.6zM519.25 45.20h1.6v1.6h-1.6zM519.25 78.80h1.6v1.6h-1.6zM519.25 112.40h1.6v1.6h-1.6zM519.25 146.00h1.6v1.6h-1.6zM519.25 179.60h1.6v1.6h-1.6zM519.25 213.20h1.6v1.6h-1.6zM519.25 246.80h1.6v1.6h-1.6zM519.25 280.40h1.6v1.6h-1.6zM519.25 314.00h1.6v1.6h-1.6zM519.25 347.60h1.6v1.6h-1.6zM519.25 381.20h1.6v1.6h-1.6zM519.25 414.80h1.6v1.6h-1.6zM519.25 448.40h1.6v1.6h-1.6zM519.25 482.00h1.6v1.6h-1.6zM519.25 515.60h1.6v1.6h-1.6zM552.85 11.60h1.6v1.6h-1.6zM552.85 45.20h1.6v1.6h-1.6zM552.85 78.80h1.6v1.6h-1.6zM552.85 112.40h1.6v1.6h-1.6zM552.85 146.00h1.6v1.6h-1.6zM552.85 179.60h1.6v1.6h-1.6zM552.85 213.20h1.6v1.6h-1.6zM552.85 246.80h1.6v1.6h-1.6zM552.85 280.40h1.6v1.6h-1.6zM552.85 314.00h1.6v1.6h-1.6zM552.85 347.60h1.6v1.6h-1.6zM552.85 381.20h1.6v1.6h-1.6zM552.85 414.80h1.6v1.6h-1.6zM552.85 448.40h1.6v1.6h-1.6zM552.85 482.00h1.6v1.6h-1.6zM552.85 515.60h1.6v1.6h-1.6zM586.45 11.60h1.6v1.6h-1.6zM586.45 45.20h1.6v1.6h-1.6zM586.45 78.80h1.6v1.6h-1.6zM586.45 112.40h1.6v1.6h-1.6zM586.45 146.00h1.6v1.6h-1.6zM586.45 179.60h1.6v1.6h-1.6zM586.45 213.20h1.6v1.6h-1.6zM586.45 246.80h1.6v1.6h-1.6zM586.45 280.40h1.6v1.6h-1.6zM586.45 314.00h1.6v1.6h-1.6zM586.45 347.60h1.6v1.6h-1.6zM586.45 381.20h1.6v1.6h-1.6zM586.45 414.80h1.6v1.6h-1.6zM586.45 448.40h1.6v1.6h-1.6zM586.45 482.00h1.6v1.6h-1.6zM586.45 515.60h1.6v1.6h-1.6zM620.05 11.60h1.6v1.6h-1.6zM620.05 45.20h1.6v1.6h-1.6zM620.05 78.80h1.6v1.6h-1.6zM620.05 112.40h1.6v1.6h-1.6zM620.05 146.00h1.6v1.6h-1.6zM620.05 179.60h1.6v1.6h-1.6zM620.05 213.20h1.6v1.6h-1.6zM620.05 246.80h1.6v1.6h-1.6zM620.05 280.40h1.6v1.6h-1.6zM620.05 314.00h1.6v1.6h-1.6zM620.05 347.60h1.6v1.6h-1.6zM620.05 381.20h1.6v1.6h-1.6zM620.05 414.80h1.6v1.6h-1.6zM620.05 448.40h1.6v1.6h-1.6zM620.05 482.00h1.6v1.6h-1.6zM620.05 515.60h1.6v1.6h-1.6zM653.65 11.60h1.6v1.6h-1.6zM653.65 45.20h1.6v1.6h-1.6zM653.65 78.80h1.6v1.6h-1.6zM653.65 112.40h1.6v1.6h-1.6zM653.65 146.00h1.6v1.6h-1.6zM653.65 179.60h1.6v1.6h-1.6zM653.65 213.20h1.6v1.6h-1.6zM653.65 246.80h1.6v1.6h-1.6zM653.65 280.40h1.6v1.6h-1.6zM653.65 314.00h1.6v1.6h-1.6zM653.65 347.60h1.6v1.6h-1.6zM653.65 381.20h1.6v1.6h-1.6zM653.65 414.80h1.6v1.6h-1.6zM653.65 448.40h1.6v1.6h-1.6zM653.65 482.00h1.6v1.6h-1.6zM653.65 515.60h1.6v1.6h-1.6zM687.25 11.60h1.6v1.6h-1.6zM687.25 45.20h1.6v1.6h-1.6zM687.25 78.80h1.6v1.6h-1.6zM687.25 112.40h1.6v1.6h-1.6zM687.25 146.00h1.6v1.6h-1.6zM687.25 179.60h1.6v1.6h-1.6zM687.25 213.20h1.6v1.6h-1.6zM687.25 246.80h1.6v1.6h-1.6zM687.25 280.40h1.6v1.6h-1.6zM687.25 314.00h1.6v1.6h-1.6zM687.25 347.60h1.6v1.6h-1.6zM687.25 381.20h1.6v1.6h-1.6zM687.25 414.80h1.6v1.6h-1.6zM687.25 448.40h1.6v1.6h-1.6zM687.25 482.00h1.6v1.6h-1.6zM687.25 515.60h1.6v1.6h-1.6zM720.85 11.60h1.6v1.6h-1.6zM720.85 45.20h1.6v1.6h-1.6zM720.85 78.80h1.6v1.6h-1.6zM720.85 112.40h1.6v1.6h-1.6zM720.85 146.00h1.6v1.6h-1.6zM720.85 179.60h1.6v1.6h-1.6zM720.85 213.20h1.6v1.6h-1.6zM720.85 246.80h1.6v1.6h-1.6zM720.85 280.40h1.6v1.6h-1.6zM720.85 314.00h1.6v1.6h-1.6zM720.85 347.60h1.6v1.6h-1.6zM720.85 381.20h1.6v1.6h-1.6zM720.85 414.80h1.6v1.6h-1.6zM720.85 448.40h1.6v1.6h-1.6zM720.85 482.00h1.6v1.6h-1.6zM720.85 515.60h1.6v1.6h-1.6zM754.45 11.60h1.6v1.6h-1.6zM754.45 45.20h1.6v1.6h-1.6zM754.45 78.80h1.6v1.6h-1.6zM754.45 112.40h1.6v1.6h-1.6zM754.45 146.00h1.6v1.6h-1.6zM754.45 179.60h1.6v1.6h-1.6zM754.45 213.20h1.6v1.6h-1.6zM754.45 246.80h1.6v1.6h-1.6zM754.45 280.40h1.6v1.6h-1.6zM754.45 314.00h1.6v1.6h-1.6zM754.45 347.60h1.6v1.6h-1.6zM754.45 381.20h1.6v1.6h-1.6zM754.45 414.80h1.6v1.6h-1.6zM754.45 448.40h1.6v1.6h-1.6zM754.45 482.00h1.6v1.6h-1.6zM754.45 515.60h1.6v1.6h-1.6z" fill="#2a2a2a"/><line x1="385.6" y1="0" x2="385.6" y2="541" stroke="#6a6a6a" stroke-width="1.2"/><line x1="0" y1="314.5" x2="785" y2="314.5" stroke="#6a6a6a" stroke-width="1.2"/><text x="593.1" y="248.3" font-size="8.6" fill="#666" font-family="Liberation Sans">X=6.672</text><text x="599.4" y="257.7" font-size="8.6" fill="#666" font-family="Liberation Sans">Y=3.929</text><text x="600.1" y="267.40000000000003" font-size="8.6" fill="#666" font-family="Liberation Sans">Z=2.320</text><text x="608.4" y="276.7" font-size="8.6" fill="#666" font-family="Liberation Sans">IMU</text><circle cx="598.6" cy="268.9" r="17.6" fill="#3aa83c" stroke="#1e3e1e" stroke-width="1"/><circle cx="598.6" cy="268.9" r="12" fill="none" stroke="#2e9630" stroke-width="1"/><circle cx="598.6" cy="268.9" r="6" fill="none" stroke="#2e9630" stroke-width="1"/><path d="M581.6 268.9h34M598.6 251.89999999999998v34" stroke="#1f8a24" stroke-width="3"/><text x="598.6" y="273.9" font-size="14" text-anchor="middle" fill="#0e2a0e" font-family="Liberation Sans">1</text><circle cx="609.8" cy="216.60000000000002" r="17.6" fill="#3a3a3a" stroke="#222" stroke-width="1"/><path d="M592.8 216.60000000000002h34M609.8 199.60000000000002v34" stroke="#000" stroke-width="3"/><circle cx="609.8" cy="216.60000000000002" r="11.8" fill="#3aa83c"/><circle cx="609.8" cy="216.60000000000002" r="8" fill="none" stroke="#2e9630" stroke-width="1"/><path d="M598.0 216.60000000000002h23.6M609.8 204.8v23.6" stroke="#1f8a24" stroke-width="3"/><text x="609.8" y="221.60000000000002" font-size="14" text-anchor="middle" fill="#0e2a0e" font-family="Liberation Sans">2</text><polygon points="530.6,95.1 636.5,250.5 432,379.7 327.4,243.10000000000002" fill="none" stroke="#38d038" stroke-width="1.1"/><circle cx="530.6" cy="95.1" r="5" fill="#44dd44"/><path d="M526.6 95.1h8M530.6 91.1v8" stroke="#2ab82a" stroke-width="0.6"/><circle cx="636.5" cy="250.5" r="5" fill="#44dd44"/><path d="M632.5 250.5h8M636.5 246.5v8" stroke="#2ab82a" stroke-width="0.6"/><circle cx="432" cy="379.7" r="5" fill="#44dd44"/><path d="M428 379.7h8M432 375.7v8" stroke="#2ab82a" stroke-width="0.6"/><circle cx="327.4" cy="243.10000000000002" r="5" fill="#44dd44"/><path d="M323.4 243.10000000000002h8M327.4 239.10000000000002v8" stroke="#2ab82a" stroke-width="0.6"/><circle cx="523.2" cy="314.6" r="17.6" fill="#5cc8f2" stroke="#333" stroke-width="1"/><circle cx="523.2" cy="314.6" r="11.8" fill="#3aa83c"/><circle cx="523.2" cy="314.6" r="8" fill="none" stroke="#2e9630" stroke-width="1"/><path d="M511.40000000000003 314.6h23.6M523.2 302.8v23.6" stroke="#1f8a24" stroke-width="3"/><text x="523.2" y="319.6" font-size="14" text-anchor="middle" fill="#0e2a0e" font-family="Liberation Sans">3</text><circle cx="385.70000000000005" cy="314.6" r="17.6" fill="#e8c050" stroke="#333" stroke-width="1"/><circle cx="385.70000000000005" cy="314.6" r="11.8" fill="#3aa83c"/><circle cx="385.70000000000005" cy="314.6" r="8" fill="none" stroke="#2e9630" stroke-width="1"/><path d="M373.90000000000003 314.6h23.6M385.70000000000005 302.8v23.6" stroke="#1f8a24" stroke-width="3"/><text x="385.70000000000005" y="319.6" font-size="14" text-anchor="middle" fill="#0e2a0e" font-family="Liberation Sans">4</text><text x="575" y="300.5" font-size="8.6" fill="#666" font-family="Liberation Sans">X=6.347</text><text x="581.3" y="309.9" font-size="8.6" fill="#666" font-family="Liberation Sans">Y=1.363</text><text x="582" y="319.6" font-size="8.6" fill="#666" font-family="Liberation Sans">Z=2.350</text><text x="590.3" y="328.9" font-size="8.6" fill="#666" font-family="Liberation Sans">IMU</text><text x="362.5" y="346.6" font-size="8.6" fill="#666" font-family="Liberation Sans">X=0.000</text><text x="368.8" y="356.0" font-size="8.6" fill="#666" font-family="Liberation Sans">Y=0.000</text><text x="369.5" y="365.70000000000005" font-size="8.6" fill="#666" font-family="Liberation Sans">Z=2.330</text><text x="377.8" y="375.0" font-size="8.6" fill="#666" font-family="Liberation Sans">IMU</text><text x="500" y="346.6" font-size="8.6" fill="#666" font-family="Liberation Sans">X=4.104</text><text x="506.3" y="356.0" font-size="8.6" fill="#666" font-family="Liberation Sans">Y=0.000</text><text x="507" y="365.70000000000005" font-size="8.6" fill="#666" font-family="Liberation Sans">Z=2.330</text><text x="515.3" y="375.0" font-size="8.6" fill="#666" font-family="Liberation Sans">IMU</text></svg>
<div class="a " style="left:922px;top:26px;width:1px;height:592px;background:#9a9a9a"></div>
<div class="a " style="left:135px;top:77px;width:1.6px;height:541px;background:#999"></div>
<div class="a " style="left:137px;top:77px;width:1.8px;height:541px;background:#f4f4f0"></div>
<div class="a" style="left:147px;top:87px;width:193px;height:116px;background:#111"></div>
<div class="a " style="left:149px;top:89px;width:32px;height:20px;background:#008000"></div>
<div class="t" style="left:150px;top:93.02px;font-size:11.2px;font-family:'Liberation Sans',sans-serif;font-weight:normal;color:#0b2a0b;letter-spacing:-0.3px">HMOB</div>
<div class="a " style="left:183px;top:89px;width:37px;height:20px;background:#808080"></div>
<div class="t" style="left:186px;top:92.34px;font-size:12px;font-family:'Liberation Sans',sans-serif;font-weight:normal;color:#111">1</div>
<div class="a " style="left:222px;top:89px;width:37px;height:20px;background:#808080"></div>
<div class="t" style="left:225px;top:92.34px;font-size:12px;font-family:'Liberation Sans',sans-serif;font-weight:normal;color:#111">2</div>
<div class="a " style="left:261px;top:89px;width:37px;height:20px;background:#808080"></div>
<div class="t" style="left:264px;top:92.34px;font-size:12px;font-family:'Liberation Sans',sans-serif;font-weight:normal;color:#111">3</div>
<div class="a " style="left:300px;top:89px;width:37px;height:20px;background:#808080"></div>
<div class="t" style="left:303px;top:92.34px;font-size:12px;font-family:'Liberation Sans',sans-serif;font-weight:normal;color:#111">4</div>
<div class="a " style="left:149px;top:111px;width:32px;height:21px;background:#808080"></div>
<div class="t" style="left:152px;top:114.34px;font-size:12px;font-family:'Liberation Sans',sans-serif;font-weight:normal;color:#111">1</div>
<div class="a " style="left:183px;top:111px;width:37px;height:21px;background:#ffffff"></div>
<div class="a " style="left:222px;top:111px;width:37px;height:21px;background:#ffffff"></div>
<div class="t" style="left:216.00px;width:40px;text-align:right;top:114.34px;font-size:12px;font-family:'Liberation Sans',sans-serif;font-weight:normal;color:#111">1.811</div>
<div class="a " style="left:261px;top:111px;width:37px;height:21px;background:#ffffff"></div>
<div class="t" style="left:255.00px;width:40px;text-align:right;top:114.34px;font-size:12px;font-family:'Liberation Sans',sans-serif;font-weight:normal;color:#111">2.634</div>
<div class="a " style="left:300px;top:111px;width:37px;height:21px;background:#ffffff"></div>
<div class="t" style="left:294.00px;width:40px;text-align:right;top:114.34px;font-size:12px;font-family:'Liberation Sans',sans-serif;font-weight:normal;color:#111">6.523</div>
<div class="a " style="left:149px;top:134px;width:32px;height:21px;background:#808080"></div>
<div class="t" style="left:152px;top:137.34px;font-size:12px;font-family:'Liberation Sans',sans-serif;font-weight:normal;color:#111">2</div>
<div class="a " style="left:183px;top:134px;width:37px;height:21px;background:#ffffff"></div>
<div class="t" style="left:177.00px;width:40px;text-align:right;top:137.34px;font-size:12px;font-family:'Liberation Sans',sans-serif;font-weight:normal;color:#111">1.797</div>
<div class="a " style="left:222px;top:134px;width:37px;height:21px;background:#ffffff"></div>
<div class="a " style="left:261px;top:134px;width:37px;height:21px;background:#ffffff"></div>
<div class="t" style="left:255.00px;width:40px;text-align:right;top:137.34px;font-size:12px;font-family:'Liberation Sans',sans-serif;font-weight:normal;color:#111">3.830</div>
<div class="a " style="left:300px;top:134px;width:37px;height:21px;background:#ffffff"></div>
<div class="t" style="left:294.00px;width:40px;text-align:right;top:137.34px;font-size:12px;font-family:'Liberation Sans',sans-serif;font-weight:normal;color:#111">7.283</div>
<div class="a " style="left:149px;top:157px;width:32px;height:20.5px;background:#808080"></div>
<div class="t" style="left:152px;top:160.34px;font-size:12px;font-family:'Liberation Sans',sans-serif;font-weight:normal;color:#111">3</div>
<div class="a " style="left:183px;top:157px;width:37px;height:20.5px;background:#ffffff"></div>
<div class="t" style="left:177.00px;width:40px;text-align:right;top:160.34px;font-size:12px;font-family:'Liberation Sans',sans-serif;font-weight:normal;color:#111">2.626</div>
<div class="a " style="left:222px;top:157px;width:37px;height:20.5px;background:#ffffff"></div>
<div class="t" style="left:216.00px;width:40px;text-align:right;top:160.34px;font-size:12px;font-family:'Liberation Sans',sans-serif;font-weight:normal;color:#111">3.897</div>
<div class="a " style="left:261px;top:157px;width:37px;height:20.5px;background:#ffffff"></div>
<div class="a " style="left:300px;top:157px;width:37px;height:20.5px;background:#ffffff"></div>
<div class="t" style="left:294.00px;width:40px;text-align:right;top:160.34px;font-size:12px;font-family:'Liberation Sans',sans-serif;font-weight:normal;color:#111">4.106</div>
<div class="a " style="left:149px;top:179.5px;width:32px;height:21.0px;background:#808080"></div>
<div class="t" style="left:152px;top:182.84px;font-size:12px;font-family:'Liberation Sans',sans-serif;font-weight:normal;color:#111">4</div>
<div class="a " style="left:183px;top:179.5px;width:37px;height:21.0px;background:#ffffff"></div>
<div class="t" style="left:177.00px;width:40px;text-align:right;top:182.84px;font-size:12px;font-family:'Liberation Sans',sans-serif;font-weight:normal;color:#111">6.498</div>
<div class="a " style="left:222px;top:179.5px;width:37px;height:21.0px;background:#ffffff"></div>
<div class="t" style="left:216.00px;width:40px;text-align:right;top:182.84px;font-size:12px;font-family:'Liberation Sans',sans-serif;font-weight:normal;color:#111">7.294</div>
<div class="a " style="left:261px;top:179.5px;width:37px;height:21.0px;background:#ffffff"></div>
<div class="t" style="left:255.00px;width:40px;text-align:right;top:182.84px;font-size:12px;font-family:'Liberation Sans',sans-serif;font-weight:normal;color:#111">4.098</div>
<div class="a " style="left:300px;top:179.5px;width:37px;height:21.0px;background:#ffffff"></div>
<div class="a " style="left:150px;top:194px;width:43px;height:16px;background:#e8e8e8;border:1px solid #222;border-left-width:2px;border-bottom-width:2px"></div>
<div class="t" style="left:154px;top:196.35px;font-size:11.4px;font-family:'Liberation Sans',sans-serif;font-weight:normal;color:#222">Upd A</div>
<div class="a " style="left:150px;top:216.5px;width:43px;height:17px;background:#008000;border:1.5px solid #1a1a1a;border-right-width:2px;border-bottom-width:2px;border-radius:1px"></div>
<div class="t" style="left:153.5px;top:219.52px;font-size:11.2px;font-family:'Liberation Sans',sans-serif;font-weight:normal;color:#98f098">CLEAR</div>
<div class="a " style="left:150px;top:240.5px;width:43px;height:17px;background:#008000;border:1.5px solid #1a1a1a;border-right-width:2px;border-bottom-width:2px;border-radius:1px"></div>
<div class="t" style="left:153.5px;top:243.52px;font-size:11.2px;font-family:'Liberation Sans',sans-serif;font-weight:normal;color:#98f098">T= 5</div>
<div class="a " style="left:150px;top:264.5px;width:43px;height:17px;background:#008000;border:1.5px solid #1a1a1a;border-right-width:2px;border-bottom-width:2px;border-radius:1px"></div>
<div class="t" style="left:153.5px;top:267.52px;font-size:11.2px;font-family:'Liberation Sans',sans-serif;font-weight:normal;color:#98f098">HVM0</div>
<div class="a " style="left:150px;top:288.5px;width:43px;height:17px;background:#008000;border:1.5px solid #1a1a1a;border-right-width:2px;border-bottom-width:2px;border-radius:1px"></div>
<div class="t" style="left:153.5px;top:291.52px;font-size:11.2px;font-family:'Liberation Sans',sans-serif;font-weight:normal;color:#98f098">SZ on</div>
<div class="a " style="left:150px;top:312.5px;width:43px;height:17px;background:#008000;border:1.5px solid #1a1a1a;border-right-width:2px;border-bottom-width:2px;border-radius:1px"></div>
<div class="t" style="left:153.5px;top:315.52px;font-size:11.2px;font-family:'Liberation Sans',sans-serif;font-weight:normal;color:#98f098">BDC on</div>
<div class="a " style="left:150px;top:336.5px;width:43px;height:17px;background:#008000;border:1.5px solid #1a1a1a;border-right-width:2px;border-bottom-width:2px;border-radius:1px"></div>
<div class="t" style="left:153.5px;top:339.52px;font-size:11.2px;font-family:'Liberation Sans',sans-serif;font-weight:normal;color:#98f098">Shot</div>
<div class="a " style="left:150px;top:360.5px;width:43px;height:17px;background:#008000;border:1.5px solid #1a1a1a;border-right-width:2px;border-bottom-width:2px;border-radius:1px"></div>
<div class="t" style="left:153.5px;top:363.52px;font-size:11.2px;font-family:'Liberation Sans',sans-serif;font-weight:normal;color:#98f098">RTP on</div>
<div class="a " style="left:150px;top:384.5px;width:43px;height:17px;background:#008000;border:1.5px solid #1a1a1a;border-right-width:2px;border-bottom-width:2px;border-radius:1px"></div>
<div class="t" style="left:153.5px;top:387.52px;font-size:11.2px;font-family:'Liberation Sans',sans-serif;font-weight:normal;color:#98f098">SBV on</div>
<div class="a " style="left:150px;top:408.5px;width:43px;height:17px;background:#008000;border:1.5px solid #1a1a1a;border-right-width:2px;border-bottom-width:2px;border-radius:1px"></div>
<div class="t" style="left:153.5px;top:411.52px;font-size:11.2px;font-family:'Liberation Sans',sans-serif;font-weight:normal;color:#98f098">MGV on</div>
<div class="a " style="left:150px;top:432.5px;width:43px;height:17px;background:#008000;border:1.5px solid #1a1a1a;border-right-width:2px;border-bottom-width:2px;border-radius:1px"></div>
<div class="t" style="left:153.5px;top:435.52px;font-size:11.2px;font-family:'Liberation Sans',sans-serif;font-weight:normal;color:#98f098">MAV on</div>
<div class="a " style="left:150px;top:456.5px;width:43px;height:17px;background:#f4f4f4;border:1.5px solid #222;border-right-width:2px;border-bottom-width:2px;border-radius:1px"></div>
<div class="t" style="left:153.5px;top:459.52px;font-size:11.2px;font-family:'Liberation Sans',sans-serif;font-weight:normal;color:#222">PBA off</div>
<div class="a " style="left:150px;top:480.5px;width:43px;height:17px;background:#008000;border:1.5px solid #1a1a1a;border-right-width:2px;border-bottom-width:2px;border-radius:1px"></div>
<div class="t" style="left:153.5px;top:483.52px;font-size:11.2px;font-family:'Liberation Sans',sans-serif;font-weight:normal;color:#98f098">BV0</div>
<div class="a" style="left:712px;top:87px;width:201px;height:58px;background:#111"></div>
<div class="a " style="left:713px;top:88px;width:27px;height:17px;background:#999999"></div>
<div class="t" style="left:716px;top:92.05px;font-size:8.8px;font-family:'Liberation Sans',sans-serif;font-weight:normal;color:#222;letter-spacing:-0.3px">TX1</div>
<div class="a " style="left:742px;top:88px;width:26.5px;height:17px;background:#999999"></div>
<div class="t" style="left:745px;top:92.05px;font-size:8.8px;font-family:'Liberation Sans',sans-serif;font-weight:normal;color:#222;letter-spacing:-0.3px">TX2</div>
<div class="a " style="left:770.5px;top:88px;width:27.0px;height:17px;background:#999999"></div>
<div class="t" style="left:773.5px;top:92.05px;font-size:8.8px;font-family:'Liberation Sans',sans-serif;font-weight:normal;color:#222;letter-spacing:-0.3px">TX3</div>
<div class="a " style="left:799.5px;top:88px;width:26.5px;height:17px;background:#999999"></div>
<div class="t" style="left:802.5px;top:92.05px;font-size:8.8px;font-family:'Liberation Sans',sans-serif;font-weight:normal;color:#222;letter-spacing:-0.3px">TX4</div>
<div class="a " style="left:828px;top:88px;width:26.5px;height:17px;background:#999999"></div>
<div class="t" style="left:831px;top:92.05px;font-size:8.8px;font-family:'Liberation Sans',sans-serif;font-weight:normal;color:#222;letter-spacing:-0.3px">TX5</div>
<div class="a " style="left:713px;top:107px;width:27px;height:17px;background:#008000"></div>
<div class="a " style="left:742px;top:107px;width:26.5px;height:17px;background:#008000"></div>
<div class="a " style="left:770.5px;top:107px;width:27.0px;height:17px;background:#008000"></div>
<div class="a " style="left:799.5px;top:107px;width:26.5px;height:17px;background:#008000"></div>
<div class="a " style="left:828px;top:107px;width:26.5px;height:17px;background:#008000"></div>
<div class="a " style="left:713px;top:126px;width:27px;height:17.5px;background:#008000"></div>
<div class="a " style="left:742px;top:126px;width:26.5px;height:17.5px;background:#008000"></div>
<div class="a " style="left:770.5px;top:126px;width:27.0px;height:17.5px;background:#008000"></div>
<div class="a " style="left:799.5px;top:126px;width:26.5px;height:17.5px;background:#008000"></div>
<div class="a " style="left:828px;top:126px;width:26.5px;height:17.5px;background:#008000"></div>
<div class="a" style="left:855px;top:87px;width:58px;height:76px;background:#111"></div>
<div class="a " style="left:856px;top:88px;width:56px;height:17px;background:#008000"></div>
<div class="t" style="left:856.00px;width:56px;text-align:center;top:91.61px;font-size:10.5px;font-family:'Liberation Sans',sans-serif;font-weight:normal;color:#0b2a0b">HIDE</div>
<div class="a " style="left:856px;top:107px;width:56px;height:17px;background:#8c8c8c"></div>
<div class="t" style="left:859px;top:110.87px;font-size:10.2px;font-family:'Liberation Sans',sans-serif;font-weight:normal;color:#1c1c2c">Normal</div>
<div class="a " style="left:856px;top:126px;width:56px;height:17px;background:#8c8c8c"></div>
<div class="t" style="left:859px;top:129.87px;font-size:10.2px;font-family:'Liberation Sans',sans-serif;font-weight:normal;color:#1c1c1c">Frozen</div>
<div class="a " style="left:856px;top:145px;width:56px;height:17px;background:#008000"></div>
<div class="t" style="left:856.00px;width:56px;text-align:center;top:148.61px;font-size:10.5px;font-family:'Liberation Sans',sans-serif;font-weight:normal;color:#0b2a0b">TX/RX</div>
<svg class="a" style="left:873px;top:174px" width="42" height="37">
<rect x="0.75" y="0.75" width="40.5" height="35.5" fill="#008000" stroke="#111" stroke-width="1.5"/>
<path d="M1 1 L15 13.7 M41 1 L26.4 13.7 M1 36 L15 21.6 M41 36 L26.4 21.6" fill="none" stroke="#111" stroke-width="0.9"/><path d="M15 8 V13.7 H8.4 M26.4 8 V13.7 H33.6 M8.4 21.6 H15 V28 M33.6 21.6 H26.4 V28" fill="none" stroke="#111" stroke-width="1.6"/>
</svg>
<svg class="a" style="left:872px;top:219px" width="44" height="42">
<ellipse cx="22" cy="20.5" rx="20.2" ry="18.5" fill="#008000" stroke="#173a17" stroke-width="1.2"/>
<path d="M12 20.5 H32 M22 9 V31" stroke="#111" stroke-width="1"/>
</svg>
<svg class="a" style="left:872px;top:262px" width="44" height="42">
<ellipse cx="22" cy="20.5" rx="20.2" ry="18.5" fill="#008000" stroke="#173a17" stroke-width="1.2"/>
<path d="M12 19.5 H32" stroke="#111" stroke-width="1.2"/>
</svg>
<svg class="a" style="left:873px;top:312px" width="42" height="38">
<rect x="0.75" y="0.75" width="40.5" height="35.2" fill="#008000" stroke="#111" stroke-width="1.5"/>
<path d="M5 19.5 H38" stroke="#111" stroke-width="1.2"/>
<g fill="#111"><circle cx="11" cy="12" r="1.4"/><circle cx="16" cy="8" r="1.4"/><circle cx="19" cy="10" r="1.4"/><circle cx="24" cy="14" r="1.4"/><circle cx="28" cy="14" r="1.4"/><circle cx="33" cy="8" r="1.4"/><circle cx="12" cy="28" r="1.4"/><circle cx="21" cy="25" r="1.4"/><circle cx="27" cy="29" r="1.4"/></g>
</svg>
<svg class="a" style="left:873px;top:355px" width="42" height="37">
<rect x="0.75" y="0.75" width="40.5" height="35.5" fill="#008000" stroke="#111" stroke-width="1.5"/>
<path d="M5 9 H38 M21.5 33 V13 M15 20 L21.5 13 L28 20" fill="none" stroke="#111" stroke-width="1"/>
</svg>
<svg class="a" style="left:866px;top:402px" width="48" height="36">
<path d="M2 24 L24 14 L46 24 L24 34Z" fill="#ececec" stroke="#808080" stroke-width="1" stroke-dasharray="1.2 1.2"/>
<path d="M2 13 L24 2 L46 13 L24 24Z" fill="#c4c4c4" stroke="#808080" stroke-width="1" stroke-dasharray="1.2 1.2"/>
</svg>
<div class="a " style="left:878px;top:441px;width:32px;height:22px;background:#c8c8c8;border:2px solid #222"></div>
<div class="t" style="left:874.00px;width:40px;text-align:center;top:446.84px;font-size:12px;font-family:'Liberation Sans',sans-serif;font-weight:normal;color:#222;letter-spacing:-0.5px">M1</div>
<div class="a " style="left:797px;top:472px;width:50px;height:25px;background:#c8c8c8;border:1.5px solid #333;border-radius:2px"></div>
<div class="t" style="left:792.00px;width:60px;text-align:center;top:478.57px;font-size:13.5px;font-family:'Liberation Sans',sans-serif;font-weight:normal;color:#1a1a1a">Update</div>
<div class="a " style="left:797px;top:501px;width:50px;height:25px;background:#008000;border:1.5px solid #222;border-radius:2px"></div>
<div class="t" style="left:792.00px;width:60px;text-align:center;top:507.57px;font-size:13.5px;font-family:'Liberation Sans',sans-serif;font-weight:normal;color:#90ee90">Auto</div>
<div class="a " style="left:850px;top:501px;width:40px;height:25px;background:#c8c8c8;border:1.5px solid #333;border-radius:2px"></div>
<div class="t" style="left:840.00px;width:60px;text-align:center;top:507.57px;font-size:13.5px;font-family:'Liberation Sans',sans-serif;font-weight:normal;color:#1a1a1a;letter-spacing:-0.3px">Apply</div>
<svg class="a" style="left:140px;top:516px" width="29" height="24"><defs><linearGradient id="G" x1="0" y1="0" x2="0" y2="1"><stop offset="0" stop-color="#8fd4ff"/><stop offset="0.45" stop-color="#3c9af5"/><stop offset="1" stop-color="#1c62e0"/></linearGradient></defs>
<g transform="translate(0.5 0.8)" fill="url(#G)" stroke="#0a3080" stroke-width="1.3" stroke-linejoin="round">
<path d="M0.5 11 L11 0.5 L13 1.8 L13 5.5 L8.5 11 L13 16.5 L13 20.2 L11 21.5Z"/><path d="M0.5 11 L11 0.5 L13 1.8 L13 5.5 L8.5 11 L13 16.5 L13 20.2 L11 21.5Z" transform="translate(13.5 0)"/></g></svg>
<svg class="a" style="left:891px;top:502px" width="29" height="24"><defs><linearGradient id="G" x1="0" y1="0" x2="0" y2="1"><stop offset="0" stop-color="#8fd4ff"/><stop offset="0.45" stop-color="#3c9af5"/><stop offset="1" stop-color="#1c62e0"/></linearGradient></defs>
<g transform="translate(28 0.8) scale(-1 1)" fill="url(#G)" stroke="#0a3080" stroke-width="1.3" stroke-linejoin="round">
<path d="M0.5 11 L11 0.5 L13 1.8 L13 5.5 L8.5 11 L13 16.5 L13 20.2 L11 21.5Z"/><path d="M0.5 11 L11 0.5 L13 1.8 L13 5.5 L8.5 11 L13 16.5 L13 20.2 L11 21.5Z" transform="translate(13.5 0)"/></g></svg>
<svg class="a" style="left:674px;top:79px" width="26" height="30"><defs><linearGradient id="G" x1="0" y1="0" x2="0" y2="1"><stop offset="0" stop-color="#8fd4ff"/><stop offset="0.45" stop-color="#3c9af5"/><stop offset="1" stop-color="#1c62e0"/></linearGradient></defs>
<g transform="translate(24 0.5) rotate(90)" fill="url(#G)" stroke="#0a3080" stroke-width="1.3" stroke-linejoin="round">
<path d="M0.5 11 L11 0.5 L13 1.8 L13 5.5 L8.5 11 L13 16.5 L13 20.2 L11 21.5Z"/><path d="M0.5 11 L11 0.5 L13 1.8 L13 5.5 L8.5 11 L13 16.5 L13 20.2 L11 21.5Z" transform="translate(13.5 0)"/></g></svg>
<svg class="a" style="left:799px;top:587px" width="26" height="30"><defs><linearGradient id="G" x1="0" y1="0" x2="0" y2="1"><stop offset="0" stop-color="#8fd4ff"/><stop offset="0.45" stop-color="#3c9af5"/><stop offset="1" stop-color="#1c62e0"/></linearGradient></defs>
<g transform="translate(1.5 29) rotate(-90)" fill="url(#G)" stroke="#0a3080" stroke-width="1.3" stroke-linejoin="round">
<path d="M0.5 11 L11 0.5 L13 1.8 L13 5.5 L8.5 11 L13 16.5 L13 20.2 L11 21.5Z"/><path d="M0.5 11 L11 0.5 L13 1.8 L13 5.5 L8.5 11 L13 16.5 L13 20.2 L11 21.5Z" transform="translate(13.5 0)"/></g></svg>
<div class="a " style="left:797px;top:558px;width:120px;height:25px;background:#e0e0e0;border:1.5px solid #3a9a3a;outline:1px solid #b0f0b0;outline-offset:-2.5px"></div>
<div class="t" style="left:796.50px;width:120px;text-align:center;top:564.15px;font-size:14px;font-family:'Liberation Sans',sans-serif;font-weight:normal;color:#3a8a3a">Freeze submap</div>
<div class="t" style="left:883.00px;width:30px;text-align:center;top:596.80px;font-size:8.5px;font-family:'Liberation Sans',sans-serif;font-weight:normal;color:#666">1 M</div>
<div class="a " style="left:877px;top:606px;width:37px;height:6px;background:#f0f060;border:1px solid #222;border-radius:1px"></div>
<svg class="a" style="left:154px;top:561px" width="59" height="41">
<rect x="0.8" y="0.8" width="57" height="38.8" rx="3.5" fill="#008000" stroke="#5ad05a" stroke-width="0.8"/>
<path d="M6.5 30.6 V6.5 M3.2 12.5 L6.5 6.5 L9.8 12.5 M6.5 30.6 H50.3 M42 26.6 L50.3 30.6 L42 34" fill="none" stroke="#111" stroke-width="1.1"/>
<text x="12.5" y="16.5" font-size="13" fill="#111" font-family="Liberation Sans">Y</text>
<text x="41.5" y="22.5" font-size="12.5" fill="#111" font-family="Liberation Sans">X</text>
</svg>
<div class="a " style="left:224px;top:585px;width:76px;height:23px;background:#40c040;border:1.5px solid #222"></div>
<div class="t" style="left:222.00px;width:80px;text-align:center;top:590.84px;font-size:12px;font-family:'Liberation Sans',sans-serif;font-weight:bold;color:#0c200c">Submap 0</div>
<div class="a " style="left:305px;top:585px;width:76px;height:23px;background:#a8c8f0;border:1.5px solid #222"></div>
<div class="t" style="left:323.00px;width:40px;text-align:center;top:589.61px;font-size:17px;font-family:'Liberation Sans',sans-serif;font-weight:bold;color:#1a7a1a;-webkit-text-stroke:0.6px #1a7a1a">+</div>
<div class="a " style="left:379px;top:127px;width:434px;height:369px;border:4px solid #e62a58"></div>
<div class="a " style="left:923px;top:26px;width:377px;height:592px;background:#dcdad5"></div>
<div class="a " style="left:923px;top:26px;width:1px;height:592px;background:#fbfbfa"></div>
<div class="a up" style="left:927px;top:29px;width:69px;height:24px;"></div>
<div class="t" style="left:917.00px;width:89px;text-align:center;top:35.77px;font-size:11.5px;font-family:'Liberation Sans',sans-serif;font-weight:normal;color:#1c1c1c;">Read all</div>
<div class="a up" style="left:999px;top:29px;width:69px;height:24px;"></div>
<div class="t" style="left:989.00px;width:89px;text-align:center;top:36.27px;font-size:11.5px;font-family:'Liberation Sans',sans-serif;font-weight:normal;color:#1c1c1c;">Write all</div>
<div class="a up" style="left:1114px;top:29px;width:92px;height:24px;"></div>
<div class="a up" style="left:1213px;top:29px;width:85px;height:24px;"></div>
<div class="t" style="left:1213px;top:36.01px;font-size:11.8px;font-family:'Liberation Sans',sans-serif;font-weight:normal;color:#1c1c1c">Cancel changes</div>
<div class="a " style="left:1297px;top:29px;width:3px;height:24px;background:#dcdad5"></div>
<div class="a " style="left:924px;top:57px;width:373px;height:561px;background:#fff;border-top:1px solid #b8b7b3"></div>
<div class="a " style="left:925px;top:60.0px;width:228px;height:20.04px;background:#dcdad5;border-bottom:1px solid #1a1a1a;box-shadow:inset 0 1px 0 #f2f1ef,inset 0 2px 0 #e6e5e2,inset 0 -1px 0 #fafaf9"></div>
<div class="a " style="left:1154px;top:60.0px;width:142px;height:20.04px;background:#dcdad5;border-bottom:1px solid #e9e8e5"></div>
<div class="t" style="left:928px;top:64.70px;font-size:11.7px;font-family:'Liberation Sans',sans-serif;font-weight:normal;">CPU ID</div>
<div class="t" style="left:1160px;top:64.70px;font-size:11.7px;font-family:'Liberation Sans',sans-serif;font-weight:normal;">142D35</div>
<div class="a " style="left:925px;top:80.04px;width:228px;height:20.04px;background:#dcdad5;border-bottom:1px solid #1a1a1a;box-shadow:inset 0 1px 0 #f2f1ef,inset 0 2px 0 #e6e5e2,inset 0 -1px 0 #fafaf9"></div>
<div class="a " style="left:1154px;top:80.04px;width:142px;height:20.04px;background:#dcdad5;border-bottom:1px solid #e9e8e5"></div>
<div class="t" style="left:928px;top:84.74px;font-size:11.7px;font-family:'Liberation Sans',sans-serif;font-weight:normal;">Firmware version</div>
<div class="t" style="left:1160px;top:84.74px;font-size:11.7px;font-family:'Liberation Sans',sans-serif;font-weight:normal;">V7.000i Super-Beacon-2</div>
<div class="a " style="left:925px;top:100.08px;width:228px;height:20.04px;background:#dcdad5;border-bottom:1px solid #1a1a1a;box-shadow:inset 0 1px 0 #f2f1ef,inset 0 2px 0 #e6e5e2,inset 0 -1px 0 #fafaf9"></div>
<div class="a " style="left:1154px;top:100.08px;width:142px;height:20.04px;background:#f8f800;border-bottom:1px solid #e9e8e5"></div>
<div class="t" style="left:928px;top:104.78px;font-size:11.7px;font-family:'Liberation Sans',sans-serif;font-weight:normal;">Power save functions</div>
<div class="t" style="left:1160px;top:104.78px;font-size:11.7px;font-family:'Liberation Sans',sans-serif;font-weight:normal;">enabled / not frozen</div>
<div class="a " style="left:925px;top:120.12px;width:228px;height:20.04px;background:#dcdad5;border-bottom:1px solid #1a1a1a;box-shadow:inset 0 1px 0 #f2f1ef,inset 0 2px 0 #e6e5e2,inset 0 -1px 0 #fafaf9"></div>
<div class="a " style="left:1154px;top:120.12px;width:142px;height:20.04px;background:#ffffff;border-bottom:1px solid #eeeeee"></div>
<div class="t" style="left:928px;top:124.82px;font-size:11.7px;font-family:'Liberation Sans',sans-serif;font-weight:normal;">Hedgehog mode</div>
<div class="t" style="left:1160px;top:124.82px;font-size:11.7px;font-family:'Liberation Sans',sans-serif;font-weight:normal;">disabled</div>
<div class="a " style="left:925px;top:140.16px;width:228px;height:20.04px;background:#dcdad5;border-bottom:1px solid #1a1a1a;box-shadow:inset 0 1px 0 #f2f1ef,inset 0 2px 0 #e6e5e2,inset 0 -1px 0 #fafaf9"></div>
<div class="a " style="left:1154px;top:140.16px;width:142px;height:20.04px;background:#dcdad5;border-bottom:1px solid #e9e8e5"></div>
<div class="t" style="left:928px;top:144.86px;font-size:11.7px;font-family:'Liberation Sans',sans-serif;font-weight:normal;">Supply voltage, V (3.5..4.2)</div>
<div class="t" style="left:1160px;top:144.86px;font-size:11.7px;font-family:'Liberation Sans',sans-serif;font-weight:normal;">3.90</div>
<div class="a " style="left:925px;top:160.2px;width:228px;height:20.04px;background:#dcdad5;border-bottom:1px solid #1a1a1a;box-shadow:inset 0 1px 0 #f2f1ef,inset 0 2px 0 #e6e5e2,inset 0 -1px 0 #fafaf9"></div>
<div class="a " style="left:1154px;top:160.2px;width:142px;height:20.04px;background:#dcdad5;border-bottom:1px solid #e9e8e5"></div>
<div class="t" style="left:928px;top:164.90px;font-size:11.7px;font-family:'Liberation Sans',sans-serif;font-weight:normal;">Time from reset, h:m:s</div>
<div class="t" style="left:1160px;top:164.90px;font-size:11.7px;font-family:'Liberation Sans',sans-serif;font-weight:normal;">00:00:30 / 12:27:04 / 0</div>
<div class="a " style="left:925px;top:180.24px;width:228px;height:20.04px;background:#dcdad5;border-bottom:1px solid #1a1a1a;box-shadow:inset 0 1px 0 #f2f1ef,inset 0 2px 0 #e6e5e2,inset 0 -1px 0 #fafaf9"></div>
<div class="a " style="left:1154px;top:180.24px;width:142px;height:20.04px;background:#dcdad5;border-bottom:1px solid #e9e8e5"></div>
<div class="t" style="left:928px;top:184.94px;font-size:11.7px;font-family:'Liberation Sans',sans-serif;font-weight:normal;">RSSI from modem, dBm</div>
<div class="t" style="left:1160px;top:184.94px;font-size:11.7px;font-family:'Liberation Sans',sans-serif;font-weight:normal;">-34</div>
<div class="a " style="left:925px;top:200.28px;width:228px;height:20.04px;background:#dcdad5;border-bottom:1px solid #1a1a1a;box-shadow:inset 0 1px 0 #f2f1ef,inset 0 2px 0 #e6e5e2,inset 0 -1px 0 #fafaf9"></div>
<div class="a " style="left:1154px;top:200.28px;width:142px;height:20.04px;background:#dcdad5;border-bottom:1px solid #e9e8e5"></div>
<div class="t" style="left:928px;top:204.98px;font-size:11.7px;font-family:'Liberation Sans',sans-serif;font-weight:normal;">RSSI to modem, dBm</div>
<div class="t" style="left:1160px;top:204.98px;font-size:11.7px;font-family:'Liberation Sans',sans-serif;font-weight:normal;">-35</div>
<div class="a " style="left:925px;top:220.32px;width:228px;height:20.04px;background:#dcdad5;border-bottom:1px solid #1a1a1a;box-shadow:inset 0 1px 0 #f2f1ef,inset 0 2px 0 #e6e5e2,inset 0 -1px 0 #fafaf9"></div>
<div class="a " style="left:1154px;top:220.32px;width:142px;height:20.04px;background:#ffffff;border-bottom:1px solid #eeeeee"></div>
<div class="t" style="left:928px;top:225.02px;font-size:11.7px;font-family:'Liberation Sans',sans-serif;font-weight:normal;">Profile</div>
<div class="t" style="left:1160px;top:225.02px;font-size:11.7px;font-family:'Liberation Sans',sans-serif;font-weight:normal;">General</div>
<div class="a " style="left:925px;top:240.36px;width:228px;height:20.04px;background:#dcdad5;border-bottom:1px solid #1a1a1a;box-shadow:inset 0 1px 0 #f2f1ef,inset 0 2px 0 #e6e5e2,inset 0 -1px 0 #fafaf9"></div>
<div class="a " style="left:1154px;top:240.36px;width:142px;height:20.04px;background:#dcdad5;border-bottom:1px solid #e9e8e5"></div>
<div class="t" style="left:928px;top:245.06px;font-size:11.7px;font-family:'Liberation Sans',sans-serif;font-weight:normal;">Radio frequency band</div>
<div class="t" style="left:1160px;top:245.06px;font-size:11.7px;font-family:'Liberation Sans',sans-serif;font-weight:normal;">868 MHz</div>
<div class="a " style="left:925px;top:260.4px;width:228px;height:20.04px;background:#dcdad5;border-bottom:1px solid #1a1a1a;box-shadow:inset 0 1px 0 #f2f1ef,inset 0 2px 0 #e6e5e2,inset 0 -1px 0 #fafaf9"></div>
<div class="a " style="left:1154px;top:260.4px;width:142px;height:20.04px;background:#dcdad5;border-bottom:1px solid #e9e8e5"></div>
<div class="t" style="left:928px;top:265.10px;font-size:11.7px;font-family:'Liberation Sans',sans-serif;font-weight:normal;">Carrier frequency, MHz</div>
<div class="t" style="left:1160px;top:265.10px;font-size:11.7px;font-family:'Liberation Sans',sans-serif;font-weight:normal;">869.522</div>
<div class="a " style="left:925px;top:280.44px;width:228px;height:20.04px;background:#dcdad5;border-bottom:1px solid #1a1a1a;box-shadow:inset 0 1px 0 #f2f1ef,inset 0 2px 0 #e6e5e2,inset 0 -1px 0 #fafaf9"></div>
<div class="a " style="left:1154px;top:280.44px;width:142px;height:20.04px;background:#dcdad5;border-bottom:1px solid #e9e8e5"></div>
<div class="t" style="left:928px;top:285.14px;font-size:11.7px;font-family:'Liberation Sans',sans-serif;font-weight:normal;">Radio channel</div>
<div class="t" style="left:1160px;top:285.14px;font-size:11.7px;font-family:'Liberation Sans',sans-serif;font-weight:normal;">3</div>
<div class="a " style="left:925px;top:300.48px;width:228px;height:20.04px;background:#dcdad5;border-bottom:1px solid #1a1a1a;box-shadow:inset 0 1px 0 #f2f1ef,inset 0 2px 0 #e6e5e2,inset 0 -1px 0 #fafaf9"></div>
<div class="a " style="left:1154px;top:300.48px;width:142px;height:20.04px;background:#ffffff;border-bottom:1px solid #eeeeee"></div>
<div class="t" style="left:928px;top:305.18px;font-size:11.7px;font-family:'Liberation Sans',sans-serif;font-weight:normal;">Device address (1..254)</div>
<div class="t" style="left:1160px;top:305.18px;font-size:11.7px;font-family:'Liberation Sans',sans-serif;font-weight:normal;">2</div>
<div class="a " style="left:925px;top:320.52px;width:228px;height:20.04px;background:#dcdad5;border-bottom:1px solid #1a1a1a;box-shadow:inset 0 1px 0 #f2f1ef,inset 0 2px 0 #e6e5e2,inset 0 -1px 0 #fafaf9"></div>
<div class="a " style="left:1154px;top:320.52px;width:142px;height:20.04px;background:#ffffff;border-bottom:1px solid #eeeeee"></div>
<div class="t" style="left:928px;top:325.22px;font-size:11.7px;font-family:'Liberation Sans',sans-serif;font-weight:normal;">Height, m (-320.000..320.000)</div>
<div class="t" style="left:1160px;top:325.22px;font-size:11.7px;font-family:'Liberation Sans',sans-serif;font-weight:normal;">2.320</div>
<div class="a " style="left:925px;top:340.56px;width:228px;height:20.04px;background:#dcdad5;border-bottom:1px solid #1a1a1a;box-shadow:inset 0 1px 0 #f2f1ef,inset 0 2px 0 #e6e5e2,inset 0 -1px 0 #fafaf9"></div>
<div class="a " style="left:1154px;top:340.56px;width:142px;height:20.04px;background:#dcdad5;border-bottom:1px solid #e9e8e5"></div>
<div class="t" style="left:928px;top:345.26px;font-size:11.7px;font-family:'Liberation Sans',sans-serif;font-weight:normal;">Measured temperature, °C</div>
<div class="t" style="left:1160px;top:345.26px;font-size:11.7px;font-family:'Liberation Sans',sans-serif;font-weight:normal;">23</div>
<div class="a " style="left:925px;top:360.6px;width:228px;height:20.04px;background:#dcdad5;border-bottom:1px solid #1a1a1a;box-shadow:inset 0 1px 0 #f2f1ef,inset 0 2px 0 #e6e5e2,inset 0 -1px 0 #fafaf9"></div>
<div class="a " style="left:1154px;top:360.6px;width:142px;height:20.04px;background:#ffffff;border-bottom:1px solid #eeeeee"></div>
<div class="t" style="left:928px;top:365.30px;font-size:11.7px;font-family:'Liberation Sans',sans-serif;font-weight:normal;">Ultrasonic frequency, Hz (100..65000)</div>
<div class="t" style="left:1160px;top:365.30px;font-size:11.7px;font-family:'Liberation Sans',sans-serif;font-weight:normal;">19000</div>
<div class="a " style="left:925px;top:380.64px;width:228px;height:20.04px;background:#dcdad5;border-bottom:1px solid #1a1a1a;box-shadow:inset 0 1px 0 #f2f1ef,inset 0 2px 0 #e6e5e2,inset 0 -1px 0 #fafaf9"></div>
<div class="a " style="left:1154px;top:380.64px;width:142px;height:20.04px;background:#dcdad5;border-bottom:1px solid #e9e8e5"></div>
<div class="t" style="left:928px;top:385.34px;font-size:11.7px;font-family:'Liberation Sans',sans-serif;font-weight:normal;">Desired speed, % (0..100)</div>
<div class="t" style="left:1160px;top:385.34px;font-size:11.7px;font-family:'Liberation Sans',sans-serif;font-weight:normal;">n/a</div>
<div class="a " style="left:925px;top:400.68px;width:228px;height:20.04px;background:#dcdad5;border-bottom:1px solid #1a1a1a;box-shadow:inset 0 1px 0 #f2f1ef,inset 0 2px 0 #e6e5e2,inset 0 -1px 0 #fafaf9"></div>
<div class="a " style="left:1154px;top:400.68px;width:142px;height:20.04px;background:#808000;border-bottom:1px solid #c8c860"></div>
<div class="t" style="left:928px;top:405.38px;font-size:11.7px;font-family:'Liberation Sans',sans-serif;font-weight:normal;">IMU</div>
<div class="t" style="left:1160px;top:405.38px;font-size:11.7px;font-family:'Liberation Sans',sans-serif;font-weight:normal;">(+) expand</div>
<div class="a " style="left:925px;top:420.72px;width:228px;height:20.04px;background:#dcdad5;border-bottom:1px solid #1a1a1a;box-shadow:inset 0 1px 0 #f2f1ef,inset 0 2px 0 #e6e5e2,inset 0 -1px 0 #fafaf9"></div>
<div class="a " style="left:1154px;top:420.72px;width:142px;height:20.04px;background:#808000;border-bottom:1px solid #c8c860"></div>
<div class="t" style="left:928px;top:425.42px;font-size:11.7px;font-family:'Liberation Sans',sans-serif;font-weight:normal;">Parameters of radio</div>
<div class="t" style="left:1160px;top:425.42px;font-size:11.7px;font-family:'Liberation Sans',sans-serif;font-weight:normal;">(+) expand</div>
<div class="a " style="left:925px;top:440.76px;width:228px;height:20.04px;background:#dcdad5;border-bottom:1px solid #1a1a1a;box-shadow:inset 0 1px 0 #f2f1ef,inset 0 2px 0 #e6e5e2,inset 0 -1px 0 #fafaf9"></div>
<div class="a " style="left:1154px;top:440.76px;width:142px;height:20.04px;background:#808000;border-bottom:1px solid #c8c860"></div>
<div class="t" style="left:928px;top:445.46px;font-size:11.7px;font-family:'Liberation Sans',sans-serif;font-weight:normal;">Ultrasound</div>
<div class="t" style="left:1160px;top:445.46px;font-size:11.7px;font-family:'Liberation Sans',sans-serif;font-weight:normal;">(+) expand</div>
<div class="a " style="left:925px;top:460.8px;width:228px;height:20.04px;background:#dcdad5;border-bottom:1px solid #1a1a1a;box-shadow:inset 0 1px 0 #f2f1ef,inset 0 2px 0 #e6e5e2,inset 0 -1px 0 #fafaf9"></div>
<div class="a " style="left:1154px;top:460.8px;width:142px;height:20.04px;background:#808000;border-bottom:1px solid #c8c860"></div>
<div class="t" style="left:928px;top:465.50px;font-size:11.7px;font-family:'Liberation Sans',sans-serif;font-weight:normal;">Interfaces</div>
<div class="t" style="left:1160px;top:465.50px;font-size:11.7px;font-family:'Liberation Sans',sans-serif;font-weight:normal;">(+) expand</div>
<div class="a " style="left:925px;top:480.84px;width:228px;height:20.04px;background:#dcdad5;border-bottom:1px solid #1a1a1a;box-shadow:inset 0 1px 0 #f2f1ef,inset 0 2px 0 #e6e5e2,inset 0 -1px 0 #fafaf9"></div>
<div class="a " style="left:1154px;top:480.84px;width:142px;height:20.04px;background:#808000;border-bottom:1px solid #c8c860"></div>
<div class="t" style="left:928px;top:485.54px;font-size:11.7px;font-family:'Liberation Sans',sans-serif;font-weight:normal;">Misc. settings</div>
<div class="t" style="left:1160px;top:485.54px;font-size:11.7px;font-family:'Liberation Sans',sans-serif;font-weight:normal;">(+) expand</div>
<div class="a " style="left:925px;top:500.88px;width:228px;height:20.04px;background:#dcdad5;border-bottom:1px solid #1a1a1a;box-shadow:inset 0 1px 0 #f2f1ef,inset 0 2px 0 #e6e5e2,inset 0 -1px 0 #fafaf9"></div>
<div class="a " style="left:1154px;top:500.88px;width:142px;height:20.04px;background:#808000;border-bottom:1px solid #c8c860"></div>
<div class="t" style="left:928px;top:505.58px;font-size:11.7px;font-family:'Liberation Sans',sans-serif;font-weight:normal;">Hedgehogs pairing</div>
<div class="t" style="left:1160px;top:505.58px;font-size:11.7px;font-family:'Liberation Sans',sans-serif;font-weight:normal;">(+) expand</div>
<div class="a " style="left:925px;top:520.92px;width:228px;height:20.04px;background:#dcdad5;border-bottom:1px solid #1a1a1a;box-shadow:inset 0 1px 0 #f2f1ef,inset 0 2px 0 #e6e5e2,inset 0 -1px 0 #fafaf9"></div>
<div class="a " style="left:1154px;top:520.92px;width:142px;height:20.04px;background:#ffffff;border-bottom:1px solid #eeeeee"></div>
<div class="t" style="left:928px;top:525.62px;font-size:11.7px;font-family:'Liberation Sans',sans-serif;font-weight:normal;">Real-time player</div>
<div class="t" style="left:1160px;top:525.62px;font-size:11.7px;font-family:'Liberation Sans',sans-serif;font-weight:normal;">disabled</div>
<div class="a " style="left:925px;top:540.96px;width:228px;height:20.04px;background:#dcdad5;border-bottom:1px solid #1a1a1a;box-shadow:inset 0 1px 0 #f2f1ef,inset 0 2px 0 #e6e5e2,inset 0 -1px 0 #fafaf9"></div>
<div class="a " style="left:1154px;top:540.96px;width:142px;height:20.04px;background:#ffffff;border-bottom:1px solid #eeeeee"></div>
<div class="t" style="left:928px;top:545.66px;font-size:11.7px;font-family:'Liberation Sans',sans-serif;font-weight:normal;">Real-time player backward (0..127)</div>
<div class="t" style="left:1160px;top:545.66px;font-size:11.7px;font-family:'Liberation Sans',sans-serif;font-weight:normal;">3</div>
<div class="a " style="left:925px;top:561.0px;width:228px;height:20.04px;background:#dcdad5;border-bottom:1px solid #1a1a1a;box-shadow:inset 0 1px 0 #f2f1ef,inset 0 2px 0 #e6e5e2,inset 0 -1px 0 #fafaf9"></div>
<div class="a " style="left:1154px;top:561.0px;width:142px;height:20.04px;background:#ffffff;border-bottom:1px solid #eeeeee"></div>
<div class="t" style="left:928px;top:565.70px;font-size:11.7px;font-family:'Liberation Sans',sans-serif;font-weight:normal;">Real-time player forward (0..127)</div>
<div class="t" style="left:1160px;top:565.70px;font-size:11.7px;font-family:'Liberation Sans',sans-serif;font-weight:normal;">5</div>
<div class="a " style="left:1153px;top:59px;width:1px;height:522px;background:#1a1a1a"></div>
<div class="a up" style="left:1019px;top:60px;width:134px;height:20px;"></div>
<div class="t" style="left:1016.00px;width:140px;text-align:center;top:64.40px;font-size:11.7px;font-family:'Liberation Sans',sans-serif;font-weight:normal;">Copy to clipboard</div></body></html>
